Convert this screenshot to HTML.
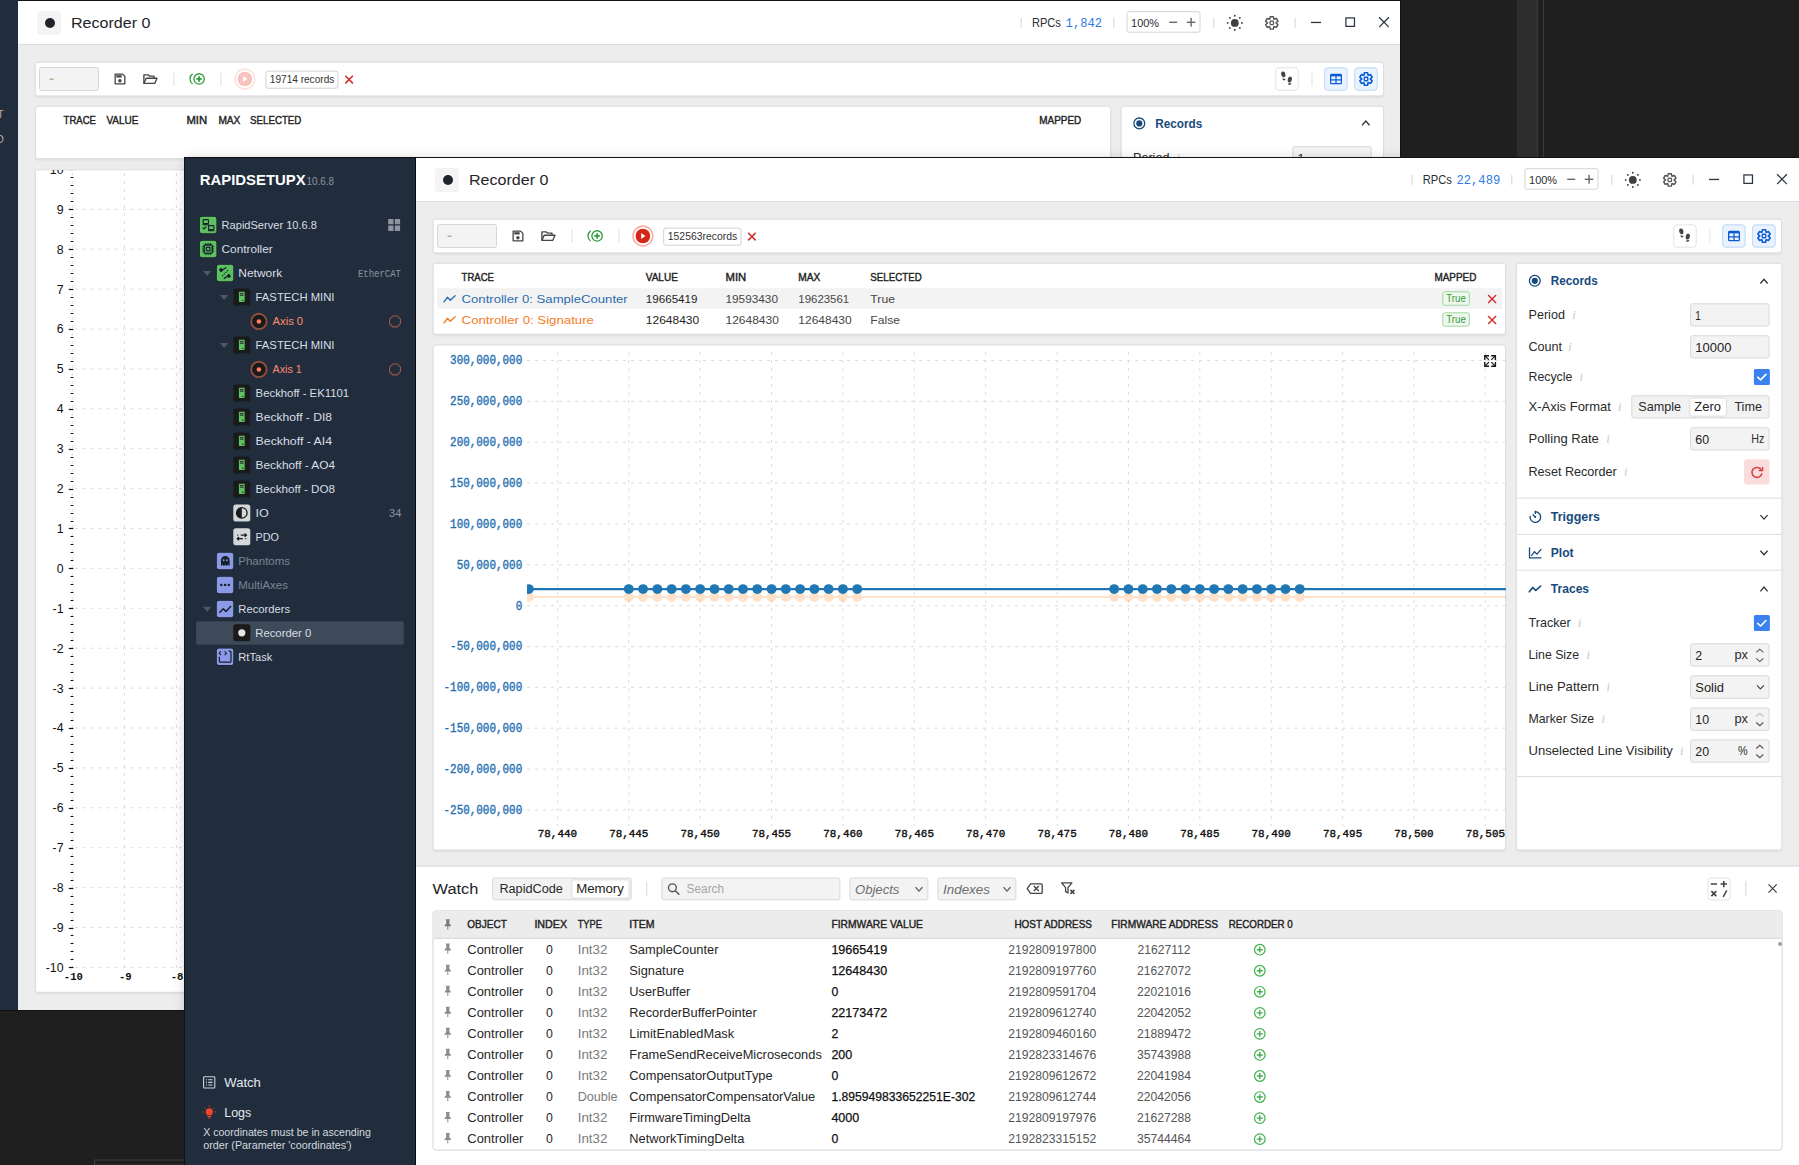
<!DOCTYPE html><html><head><meta charset="utf-8"><style>*{margin:0;padding:0}html,body{width:1799px;height:1165px;overflow:hidden;background:#1f1f1f}svg{display:block}</style></head><body>
<svg width="1799" height="1165" viewBox="0 0 1799 1165">
<defs><linearGradient id="shL" x1="0" x2="1" y1="0" y2="0"><stop offset="0" stop-color="#000" stop-opacity="0"/><stop offset="1" stop-color="#000" stop-opacity="0.13"/></linearGradient><linearGradient id="shT" x1="0" x2="0" y1="0" y2="1"><stop offset="0" stop-color="#000" stop-opacity="0"/><stop offset="1" stop-color="#000" stop-opacity="0.10"/></linearGradient><clipPath id="backchart"><rect x="35" y="170" width="160" height="822"/></clipPath><clipPath id="backwin"><rect x="18" y="45" width="1382" height="965"/></clipPath><filter id="blur1" x="-5%" y="-5%" width="110%" height="110%"><feGaussianBlur stdDeviation="0.8"/></filter><filter id="blur6" x="-10%" y="-10%" width="120%" height="120%"><feGaussianBlur stdDeviation="7"/></filter></defs>
<rect x="0.00" y="0.00" width="18.00" height="1010.00" rx="0" fill="#212d3d"/>
<text x="-2.50" y="118.00" font-size="10.00" font-family="Liberation Sans" fill="#c2b2ac">T</text>
<text x="-3.50" y="143.30" font-size="10.00" font-family="Liberation Sans" fill="#c2b2ac">D</text>
<rect x="1517.00" y="0.00" width="20.00" height="157.00" rx="0" fill="#2d2d2d"/>
<rect x="1537.00" y="0.00" width="1.00" height="157.00" rx="0" fill="#3a3a3a"/>
<rect x="1543.00" y="0.00" width="1.00" height="157.00" rx="0" fill="#3a3a3a"/>
<rect x="94.50" y="1160.00" width="94.00" height="5.00" rx="0" fill="none" stroke="#3c3c3c" stroke-width="1"/>
<rect x="18.00" y="0.00" width="1383.00" height="1010.00" rx="0" fill="#ededed"/>
<rect x="18.00" y="0.00" width="1383.00" height="1.00" rx="0" fill="#111"/>
<rect x="18.00" y="1.00" width="1383.00" height="43.00" rx="0" fill="#ffffff"/>
<rect x="18.00" y="44.00" width="1383.00" height="1.00" rx="0" fill="#dcdde2"/>
<rect x="37.00" y="11.00" width="24.00" height="24.00" rx="3" fill="#f4f4f5"/>
<circle cx="50.00" cy="23.00" r="5.00" fill="#1f232a"/>
<text x="71.00" y="28.00" font-size="15.40" font-family="Liberation Sans" fill="#1f232a" textLength="79.50" lengthAdjust="spacingAndGlyphs">Recorder 0</text>
<text x="1065.60" y="27.10" font-size="12.50" font-family="Liberation Mono" fill="#2f7ae5" textLength="36.60" lengthAdjust="spacingAndGlyphs">1,842</text>
<text x="1031.90" y="27.10" font-size="12.40" font-family="Liberation Sans" fill="#2a2e35" textLength="28.90" lengthAdjust="spacingAndGlyphs">RPCs</text>
<rect x="1020.70" y="17.80" width="1.00" height="10.00" rx="0" fill="#d5d5d5"/>
<rect x="1113.30" y="17.80" width="1.00" height="10.00" rx="0" fill="#d5d5d5"/>
<rect x="1127.00" y="11.70" width="73.00" height="20.50" rx="2" fill="#ffffff" stroke="#d4d4d4" stroke-width="1"/>
<text x="1131.10" y="26.60" font-size="11.60" font-family="Liberation Sans" fill="#2a2e35" textLength="28.00" lengthAdjust="spacingAndGlyphs">100%</text>
<rect x="1169.20" y="21.60" width="8.00" height="1.40" rx="0" fill="#666"/>
<rect x="1186.80" y="21.60" width="8.60" height="1.40" rx="0" fill="#666"/>
<rect x="1190.40" y="17.80" width="1.40" height="8.90" rx="0" fill="#666"/>
<rect x="1213.30" y="17.80" width="1.00" height="10.00" rx="0" fill="#d5d5d5"/>
<g transform="translate(1234.80 22.90)"><circle cx="0" cy="0" r="3.9" fill="#404040"/><circle cx="7.10" cy="0.00" r="0.95" fill="#404040"/><circle cx="5.02" cy="5.02" r="0.95" fill="#404040"/><circle cx="0.00" cy="7.10" r="0.95" fill="#404040"/><circle cx="-5.02" cy="5.02" r="0.95" fill="#404040"/><circle cx="-7.10" cy="0.00" r="0.95" fill="#404040"/><circle cx="-5.02" cy="-5.02" r="0.95" fill="#404040"/><circle cx="-0.00" cy="-7.10" r="0.95" fill="#404040"/><circle cx="5.02" cy="-5.02" r="0.95" fill="#404040"/></g>
<g transform="translate(1271.80 22.90)"><path d="M-1.99 -4.26L-1.55 -6.21L1.55 -6.21L1.99 -4.26Q1.93 -3.34 2.70 -3.85L4.60 -4.45L6.15 -1.76L4.68 -0.41Q3.85 0.00 4.68 0.41L6.15 1.76L4.60 4.45L2.70 3.85Q1.93 3.34 1.99 4.26L1.55 6.21L-1.55 6.21L-1.99 4.26Q-1.93 3.34 -2.70 3.85L-4.60 4.45L-6.15 1.76L-4.68 0.41Q-3.85 0.00 -4.68 -0.41L-6.15 -1.76L-4.60 -4.45L-2.70 -3.85Q-1.93 -3.34 -1.99 -4.26Z" fill="none" stroke="#555" stroke-width="1.45" stroke-linejoin="round"/><rect x="-1.70" y="-1.70" width="3.40" height="3.40" rx="0.77" fill="none" stroke="#555" stroke-width="1.30"/></g>
<rect x="1294.60" y="17.80" width="1.00" height="10.00" rx="0" fill="#d5d5d5"/>
<rect x="1311.00" y="21.80" width="10.00" height="1.30" rx="0" fill="#2c3441"/>
<rect x="1345.92" y="17.93" width="8.55" height="8.45" rx="0" fill="none" stroke="#2c3441" stroke-width="1.25"/>
<g transform="translate(1378.60 16.80)"><path d="M0.5 0.5L10.3 10.3M10.3 0.5L0.5 10.3" stroke="#2c3441" stroke-width="1.25" fill="none"/></g>
<rect x="35.20" y="63.30" width="1348.30" height="34.10" rx="2.5" fill="#000" opacity="0.07" filter="url(#blur1)"/>
<rect x="35.20" y="62.30" width="1348.30" height="33.60" rx="2.5" fill="#ffffff" stroke="#dcdde2" stroke-width="1"/>
<rect x="39.50" y="67.50" width="59.00" height="23.00" rx="2" fill="#f3f3f3" stroke="#d6d6d6" stroke-width="1"/>
<rect x="49.60" y="78.60" width="4.00" height="1.20" rx="0" fill="#b39a7a"/>
<g transform="translate(114.00 73.00)"><path d="M1.15 1.15h7.5l2.2 2.2v7.5h-9.7z" fill="none" stroke="#454545" stroke-width="1.3" stroke-linejoin="round"/><rect x="2.3" y="2.2" width="5.4" height="2.3" fill="#454545"/><circle cx="5.9" cy="7.8" r="1.75" fill="#454545"/></g>
<g transform="translate(143.00 73.60)"><path d="M0.9 9.8V1.2h4.1l1.3 1.3h4.7v2" fill="none" stroke="#454545" stroke-width="1.35" stroke-linejoin="round"/><path d="M0.9 9.8l2.3-5.2h10.8l-2.3 5.2z" fill="none" stroke="#454545" stroke-width="1.35" stroke-linejoin="round"/></g>
<rect x="173.40" y="72.00" width="1.00" height="13.60" rx="0" fill="#e0e0e0"/>
<g transform="translate(189.00 73.00)"><path d="M3.6 0.9A6.2 6.2 0 0 0 3.6 11" fill="none" stroke="#2e9e3e" stroke-width="1.3"/><circle cx="10.1" cy="5.95" r="5.2" fill="none" stroke="#2e9e3e" stroke-width="1.35"/><path d="M10.1 3.2v5.5M7.35 5.95h5.5" stroke="#2e9e3e" stroke-width="1.75"/></g>
<rect x="220.40" y="72.00" width="1.00" height="13.60" rx="0" fill="#e0e0e0"/>
<g transform="translate(244.90 79.00)"><circle cx="0" cy="0" r="9.9" fill="none" stroke="#fde2dd" stroke-width="1.6"/><circle cx="0" cy="0" r="7.3" fill="#f6c3bd"/><path d="M-1.7 -3.1l4.2 3.1-4.2 3.1z" fill="#fff"/></g>
<rect x="265.90" y="71.10" width="72.00" height="17.10" rx="2" fill="#ffffff" stroke="#d0d0d0" stroke-width="1"/>
<text x="269.80" y="83.40" font-size="10.80" font-family="Liberation Sans" fill="#333" textLength="64.50" lengthAdjust="spacingAndGlyphs">19714 records</text>
<g transform="translate(344.80 75.30)"><path d="M0.5 0.5L8.1 8.1M8.1 0.5L0.5 8.1" stroke="#d42a2a" stroke-width="1.5" fill="none"/></g>
<rect x="1275.80" y="67.80" width="22.40" height="22.40" rx="3" fill="#ffffff" stroke="#e3e3e3" stroke-width="1"/>
<g transform="translate(1281.30 72.30)"><ellipse cx="2.0" cy="2.1" rx="2.1" ry="2.9" fill="#444" transform="rotate(-12 2.0 2.1)"/><path d="M1.1 5.9l3.2 0.7-0.9 1.6-1.8-0.4z" fill="#444"/><ellipse cx="8.5" cy="7.3" rx="2.05" ry="3.0" fill="#444" transform="rotate(12 8.5 7.3)"/><path d="M6.6 11.2l3.2-0.6 0.1 1.4-2.5 0.6z" fill="#444"/></g>
<rect x="1311.50" y="72.30" width="1.00" height="13.40" rx="0" fill="#e3e3e3"/>
<rect x="1324.70" y="67.80" width="22.50" height="22.40" rx="3" fill="#eaf3fd" stroke="#bad8f6" stroke-width="1"/>
<g transform="translate(1330.00 73.80)"><rect x="0.65" y="0.65" width="10.7" height="9.2" rx="0.9" fill="none" stroke="#0b5bd3" stroke-width="1.3"/><rect x="0.65" y="0.65" width="10.7" height="1.9" fill="#0b5bd3"/><path d="M6 2v7.8M0.7 6.1h10.6" stroke="#0b5bd3" stroke-width="1.2"/></g>
<rect x="1354.70" y="67.80" width="22.50" height="22.40" rx="3" fill="#eaf3fd" stroke="#bad8f6" stroke-width="1"/>
<g transform="translate(1366.00 79.00)"><path d="M-1.99 -4.26L-1.55 -6.21L1.55 -6.21L1.99 -4.26Q1.93 -3.34 2.70 -3.85L4.60 -4.45L6.15 -1.76L4.68 -0.41Q3.85 0.00 4.68 0.41L6.15 1.76L4.60 4.45L2.70 3.85Q1.93 3.34 1.99 4.26L1.55 6.21L-1.55 6.21L-1.99 4.26Q-1.93 3.34 -2.70 3.85L-4.60 4.45L-6.15 1.76L-4.68 0.41Q-3.85 0.00 -4.68 -0.41L-6.15 -1.76L-4.60 -4.45L-2.70 -3.85Q-1.93 -3.34 -1.99 -4.26Z" fill="none" stroke="#0b5bd3" stroke-width="1.6" stroke-linejoin="round"/><rect x="-1.70" y="-1.70" width="3.40" height="3.40" rx="0.77" fill="none" stroke="#0b5bd3" stroke-width="1.44"/></g>
<rect x="35.50" y="107.20" width="1075.10" height="53.00" rx="2.5" fill="#000" opacity="0.07" filter="url(#blur1)"/>
<rect x="35.50" y="106.20" width="1075.10" height="52.50" rx="2.5" fill="#ffffff" stroke="#dcdde2" stroke-width="1"/>
<text x="63.60" y="124.40" font-size="10.50" font-family="Liberation Sans" fill="#222" textLength="32.40" lengthAdjust="spacingAndGlyphs" stroke="#222" stroke-width="0.4">TRACE</text>
<text x="106.40" y="124.40" font-size="10.50" font-family="Liberation Sans" fill="#222" textLength="32.00" lengthAdjust="spacingAndGlyphs" stroke="#222" stroke-width="0.4">VALUE</text>
<text x="186.40" y="124.40" font-size="10.50" font-family="Liberation Sans" fill="#222" textLength="20.70" lengthAdjust="spacingAndGlyphs" stroke="#222" stroke-width="0.4">MIN</text>
<text x="218.40" y="124.40" font-size="10.50" font-family="Liberation Sans" fill="#222" textLength="22.00" lengthAdjust="spacingAndGlyphs" stroke="#222" stroke-width="0.4">MAX</text>
<text x="250.00" y="124.40" font-size="10.50" font-family="Liberation Sans" fill="#222" textLength="51.40" lengthAdjust="spacingAndGlyphs" stroke="#222" stroke-width="0.4">SELECTED</text>
<text x="1039.30" y="124.40" font-size="10.50" font-family="Liberation Sans" fill="#222" textLength="41.90" lengthAdjust="spacingAndGlyphs" stroke="#222" stroke-width="0.4">MAPPED</text>
<rect x="1121.20" y="107.20" width="262.30" height="59.50" rx="2.5" fill="#000" opacity="0.07" filter="url(#blur1)"/>
<rect x="1121.20" y="106.20" width="262.30" height="59.00" rx="2.5" fill="#ffffff" stroke="#dcdde2" stroke-width="1"/>
<g transform="translate(1139.30 123.40)"><circle cx="0" cy="0" r="5.4" fill="none" stroke="#174a7c" stroke-width="1.3"/><circle cx="0" cy="0" r="3.1" fill="#174a7c"/></g>
<text x="1155.30" y="128.10" font-size="12.60" font-family="Liberation Sans" fill="#174a7c" font-weight="bold" textLength="47.00" lengthAdjust="spacingAndGlyphs">Records</text>
<g transform="translate(1361.60 120.60)"><path d="M0.5 4.7L4.2 0.5L7.9 4.7" fill="none" stroke="#333" stroke-width="1.3"/></g>
<text x="1133.00" y="162.20" font-size="12.60" font-family="Liberation Sans" fill="#2a2a2a">Period</text>
<text x="1176.50" y="162.20" font-size="12.50" font-family="Liberation Serif" fill="#c8c8c8" font-style="italic">i</text>
<rect x="1292.80" y="146.70" width="78.40" height="23.00" rx="2" fill="#f3f3f3" stroke="#d8d8d8" stroke-width="1"/>
<text x="1297.60" y="162.50" font-size="12.40" font-family="Liberation Sans" fill="#222">1</text>
<rect x="35.40" y="170.80" width="1075.20" height="823.00" rx="2.5" fill="#000" opacity="0.07" filter="url(#blur1)"/>
<rect x="35.40" y="169.80" width="1075.20" height="822.50" rx="2.5" fill="#ffffff" stroke="#dcdde2" stroke-width="1"/>
<g clip-path="url(#backchart)"><line x1="72.3" y1="173" x2="72.3" y2="968" stroke="#dedede" stroke-width="1" stroke-dasharray="3 5"/><line x1="124.5" y1="173" x2="124.5" y2="968" stroke="#dedede" stroke-width="1" stroke-dasharray="3 5"/><line x1="176.6" y1="173" x2="176.6" y2="968" stroke="#dedede" stroke-width="1" stroke-dasharray="3 5"/><line x1="75" y1="967.4" x2="190" y2="967.4" stroke="#dedede" stroke-width="1" stroke-dasharray="3 5"/><line x1="68.8" y1="967.5" x2="73.4" y2="967.5" stroke="#111" stroke-width="1.2"/><text x="63.5" y="971.8" font-size="12.3" font-family="Liberation Sans" fill="#111" text-anchor="end">-10</text><line x1="75" y1="927.5" x2="190" y2="927.5" stroke="#dedede" stroke-width="1" stroke-dasharray="3 5"/><line x1="68.8" y1="928.5" x2="73.4" y2="928.5" stroke="#111" stroke-width="1.2"/><line x1="70.6" y1="935.5" x2="73.4" y2="935.5" stroke="#111" stroke-width="1"/><line x1="70.6" y1="943.5" x2="73.4" y2="943.5" stroke="#111" stroke-width="1"/><line x1="70.6" y1="951.5" x2="73.4" y2="951.5" stroke="#111" stroke-width="1"/><line x1="70.6" y1="959.5" x2="73.4" y2="959.5" stroke="#111" stroke-width="1"/><text x="63.5" y="931.9" font-size="12.3" font-family="Liberation Sans" fill="#111" text-anchor="end">-9</text><line x1="75" y1="887.6" x2="190" y2="887.6" stroke="#dedede" stroke-width="1" stroke-dasharray="3 5"/><line x1="68.8" y1="888.5" x2="73.4" y2="888.5" stroke="#111" stroke-width="1.2"/><line x1="70.6" y1="896.5" x2="73.4" y2="896.5" stroke="#111" stroke-width="1"/><line x1="70.6" y1="904.5" x2="73.4" y2="904.5" stroke="#111" stroke-width="1"/><line x1="70.6" y1="912.5" x2="73.4" y2="912.5" stroke="#111" stroke-width="1"/><line x1="70.6" y1="920.5" x2="73.4" y2="920.5" stroke="#111" stroke-width="1"/><text x="63.5" y="892.0" font-size="12.3" font-family="Liberation Sans" fill="#111" text-anchor="end">-8</text><line x1="75" y1="847.7" x2="190" y2="847.7" stroke="#dedede" stroke-width="1" stroke-dasharray="3 5"/><line x1="68.8" y1="848.5" x2="73.4" y2="848.5" stroke="#111" stroke-width="1.2"/><line x1="70.6" y1="856.5" x2="73.4" y2="856.5" stroke="#111" stroke-width="1"/><line x1="70.6" y1="864.5" x2="73.4" y2="864.5" stroke="#111" stroke-width="1"/><line x1="70.6" y1="872.5" x2="73.4" y2="872.5" stroke="#111" stroke-width="1"/><line x1="70.6" y1="880.5" x2="73.4" y2="880.5" stroke="#111" stroke-width="1"/><text x="63.5" y="852.1" font-size="12.3" font-family="Liberation Sans" fill="#111" text-anchor="end">-7</text><line x1="75" y1="807.8" x2="190" y2="807.8" stroke="#dedede" stroke-width="1" stroke-dasharray="3 5"/><line x1="68.8" y1="808.5" x2="73.4" y2="808.5" stroke="#111" stroke-width="1.2"/><line x1="70.6" y1="816.5" x2="73.4" y2="816.5" stroke="#111" stroke-width="1"/><line x1="70.6" y1="824.5" x2="73.4" y2="824.5" stroke="#111" stroke-width="1"/><line x1="70.6" y1="832.5" x2="73.4" y2="832.5" stroke="#111" stroke-width="1"/><line x1="70.6" y1="840.5" x2="73.4" y2="840.5" stroke="#111" stroke-width="1"/><text x="63.5" y="812.2" font-size="12.3" font-family="Liberation Sans" fill="#111" text-anchor="end">-6</text><line x1="75" y1="767.9" x2="190" y2="767.9" stroke="#dedede" stroke-width="1" stroke-dasharray="3 5"/><line x1="68.8" y1="768.5" x2="73.4" y2="768.5" stroke="#111" stroke-width="1.2"/><line x1="70.6" y1="776.5" x2="73.4" y2="776.5" stroke="#111" stroke-width="1"/><line x1="70.6" y1="784.5" x2="73.4" y2="784.5" stroke="#111" stroke-width="1"/><line x1="70.6" y1="792.5" x2="73.4" y2="792.5" stroke="#111" stroke-width="1"/><line x1="70.6" y1="800.5" x2="73.4" y2="800.5" stroke="#111" stroke-width="1"/><text x="63.5" y="772.3" font-size="12.3" font-family="Liberation Sans" fill="#111" text-anchor="end">-5</text><line x1="75" y1="728.0" x2="190" y2="728.0" stroke="#dedede" stroke-width="1" stroke-dasharray="3 5"/><line x1="68.8" y1="728.5" x2="73.4" y2="728.5" stroke="#111" stroke-width="1.2"/><line x1="70.6" y1="736.5" x2="73.4" y2="736.5" stroke="#111" stroke-width="1"/><line x1="70.6" y1="744.5" x2="73.4" y2="744.5" stroke="#111" stroke-width="1"/><line x1="70.6" y1="752.5" x2="73.4" y2="752.5" stroke="#111" stroke-width="1"/><line x1="70.6" y1="760.5" x2="73.4" y2="760.5" stroke="#111" stroke-width="1"/><text x="63.5" y="732.4" font-size="12.3" font-family="Liberation Sans" fill="#111" text-anchor="end">-4</text><line x1="75" y1="688.1" x2="190" y2="688.1" stroke="#dedede" stroke-width="1" stroke-dasharray="3 5"/><line x1="68.8" y1="688.5" x2="73.4" y2="688.5" stroke="#111" stroke-width="1.2"/><line x1="70.6" y1="696.5" x2="73.4" y2="696.5" stroke="#111" stroke-width="1"/><line x1="70.6" y1="704.5" x2="73.4" y2="704.5" stroke="#111" stroke-width="1"/><line x1="70.6" y1="712.5" x2="73.4" y2="712.5" stroke="#111" stroke-width="1"/><line x1="70.6" y1="720.5" x2="73.4" y2="720.5" stroke="#111" stroke-width="1"/><text x="63.5" y="692.5" font-size="12.3" font-family="Liberation Sans" fill="#111" text-anchor="end">-3</text><line x1="75" y1="648.2" x2="190" y2="648.2" stroke="#dedede" stroke-width="1" stroke-dasharray="3 5"/><line x1="68.8" y1="648.5" x2="73.4" y2="648.5" stroke="#111" stroke-width="1.2"/><line x1="70.6" y1="656.5" x2="73.4" y2="656.5" stroke="#111" stroke-width="1"/><line x1="70.6" y1="664.5" x2="73.4" y2="664.5" stroke="#111" stroke-width="1"/><line x1="70.6" y1="672.5" x2="73.4" y2="672.5" stroke="#111" stroke-width="1"/><line x1="70.6" y1="680.5" x2="73.4" y2="680.5" stroke="#111" stroke-width="1"/><text x="63.5" y="652.6" font-size="12.3" font-family="Liberation Sans" fill="#111" text-anchor="end">-2</text><line x1="75" y1="608.3" x2="190" y2="608.3" stroke="#dedede" stroke-width="1" stroke-dasharray="3 5"/><line x1="68.8" y1="608.5" x2="73.4" y2="608.5" stroke="#111" stroke-width="1.2"/><line x1="70.6" y1="616.5" x2="73.4" y2="616.5" stroke="#111" stroke-width="1"/><line x1="70.6" y1="624.5" x2="73.4" y2="624.5" stroke="#111" stroke-width="1"/><line x1="70.6" y1="632.5" x2="73.4" y2="632.5" stroke="#111" stroke-width="1"/><line x1="70.6" y1="640.5" x2="73.4" y2="640.5" stroke="#111" stroke-width="1"/><text x="63.5" y="612.7" font-size="12.3" font-family="Liberation Sans" fill="#111" text-anchor="end">-1</text><line x1="75" y1="568.4" x2="190" y2="568.4" stroke="#dedede" stroke-width="1" stroke-dasharray="3 5"/><line x1="68.8" y1="568.5" x2="73.4" y2="568.5" stroke="#111" stroke-width="1.2"/><line x1="70.6" y1="576.5" x2="73.4" y2="576.5" stroke="#111" stroke-width="1"/><line x1="70.6" y1="584.5" x2="73.4" y2="584.5" stroke="#111" stroke-width="1"/><line x1="70.6" y1="592.5" x2="73.4" y2="592.5" stroke="#111" stroke-width="1"/><line x1="70.6" y1="600.5" x2="73.4" y2="600.5" stroke="#111" stroke-width="1"/><text x="63.5" y="572.8" font-size="12.3" font-family="Liberation Sans" fill="#111" text-anchor="end">0</text><line x1="75" y1="528.5" x2="190" y2="528.5" stroke="#dedede" stroke-width="1" stroke-dasharray="3 5"/><line x1="68.8" y1="528.5" x2="73.4" y2="528.5" stroke="#111" stroke-width="1.2"/><line x1="70.6" y1="536.5" x2="73.4" y2="536.5" stroke="#111" stroke-width="1"/><line x1="70.6" y1="544.5" x2="73.4" y2="544.5" stroke="#111" stroke-width="1"/><line x1="70.6" y1="552.5" x2="73.4" y2="552.5" stroke="#111" stroke-width="1"/><line x1="70.6" y1="560.5" x2="73.4" y2="560.5" stroke="#111" stroke-width="1"/><text x="63.5" y="532.9" font-size="12.3" font-family="Liberation Sans" fill="#111" text-anchor="end">1</text><line x1="75" y1="488.6" x2="190" y2="488.6" stroke="#dedede" stroke-width="1" stroke-dasharray="3 5"/><line x1="68.8" y1="489.5" x2="73.4" y2="489.5" stroke="#111" stroke-width="1.2"/><line x1="70.6" y1="497.5" x2="73.4" y2="497.5" stroke="#111" stroke-width="1"/><line x1="70.6" y1="505.5" x2="73.4" y2="505.5" stroke="#111" stroke-width="1"/><line x1="70.6" y1="513.5" x2="73.4" y2="513.5" stroke="#111" stroke-width="1"/><line x1="70.6" y1="521.5" x2="73.4" y2="521.5" stroke="#111" stroke-width="1"/><text x="63.5" y="493.0" font-size="12.3" font-family="Liberation Sans" fill="#111" text-anchor="end">2</text><line x1="75" y1="448.7" x2="190" y2="448.7" stroke="#dedede" stroke-width="1" stroke-dasharray="3 5"/><line x1="68.8" y1="449.5" x2="73.4" y2="449.5" stroke="#111" stroke-width="1.2"/><line x1="70.6" y1="457.5" x2="73.4" y2="457.5" stroke="#111" stroke-width="1"/><line x1="70.6" y1="465.5" x2="73.4" y2="465.5" stroke="#111" stroke-width="1"/><line x1="70.6" y1="473.5" x2="73.4" y2="473.5" stroke="#111" stroke-width="1"/><line x1="70.6" y1="481.5" x2="73.4" y2="481.5" stroke="#111" stroke-width="1"/><text x="63.5" y="453.1" font-size="12.3" font-family="Liberation Sans" fill="#111" text-anchor="end">3</text><line x1="75" y1="408.8" x2="190" y2="408.8" stroke="#dedede" stroke-width="1" stroke-dasharray="3 5"/><line x1="68.8" y1="409.5" x2="73.4" y2="409.5" stroke="#111" stroke-width="1.2"/><line x1="70.6" y1="417.5" x2="73.4" y2="417.5" stroke="#111" stroke-width="1"/><line x1="70.6" y1="425.5" x2="73.4" y2="425.5" stroke="#111" stroke-width="1"/><line x1="70.6" y1="433.5" x2="73.4" y2="433.5" stroke="#111" stroke-width="1"/><line x1="70.6" y1="441.5" x2="73.4" y2="441.5" stroke="#111" stroke-width="1"/><text x="63.5" y="413.2" font-size="12.3" font-family="Liberation Sans" fill="#111" text-anchor="end">4</text><line x1="75" y1="368.9" x2="190" y2="368.9" stroke="#dedede" stroke-width="1" stroke-dasharray="3 5"/><line x1="68.8" y1="369.5" x2="73.4" y2="369.5" stroke="#111" stroke-width="1.2"/><line x1="70.6" y1="377.5" x2="73.4" y2="377.5" stroke="#111" stroke-width="1"/><line x1="70.6" y1="385.5" x2="73.4" y2="385.5" stroke="#111" stroke-width="1"/><line x1="70.6" y1="393.5" x2="73.4" y2="393.5" stroke="#111" stroke-width="1"/><line x1="70.6" y1="401.5" x2="73.4" y2="401.5" stroke="#111" stroke-width="1"/><text x="63.5" y="373.3" font-size="12.3" font-family="Liberation Sans" fill="#111" text-anchor="end">5</text><line x1="75" y1="329.0" x2="190" y2="329.0" stroke="#dedede" stroke-width="1" stroke-dasharray="3 5"/><line x1="68.8" y1="329.5" x2="73.4" y2="329.5" stroke="#111" stroke-width="1.2"/><line x1="70.6" y1="337.5" x2="73.4" y2="337.5" stroke="#111" stroke-width="1"/><line x1="70.6" y1="345.5" x2="73.4" y2="345.5" stroke="#111" stroke-width="1"/><line x1="70.6" y1="353.5" x2="73.4" y2="353.5" stroke="#111" stroke-width="1"/><line x1="70.6" y1="361.5" x2="73.4" y2="361.5" stroke="#111" stroke-width="1"/><text x="63.5" y="333.4" font-size="12.3" font-family="Liberation Sans" fill="#111" text-anchor="end">6</text><line x1="75" y1="289.1" x2="190" y2="289.1" stroke="#dedede" stroke-width="1" stroke-dasharray="3 5"/><line x1="68.8" y1="289.5" x2="73.4" y2="289.5" stroke="#111" stroke-width="1.2"/><line x1="70.6" y1="297.5" x2="73.4" y2="297.5" stroke="#111" stroke-width="1"/><line x1="70.6" y1="305.5" x2="73.4" y2="305.5" stroke="#111" stroke-width="1"/><line x1="70.6" y1="313.5" x2="73.4" y2="313.5" stroke="#111" stroke-width="1"/><line x1="70.6" y1="321.5" x2="73.4" y2="321.5" stroke="#111" stroke-width="1"/><text x="63.5" y="293.5" font-size="12.3" font-family="Liberation Sans" fill="#111" text-anchor="end">7</text><line x1="75" y1="249.2" x2="190" y2="249.2" stroke="#dedede" stroke-width="1" stroke-dasharray="3 5"/><line x1="68.8" y1="249.5" x2="73.4" y2="249.5" stroke="#111" stroke-width="1.2"/><line x1="70.6" y1="257.5" x2="73.4" y2="257.5" stroke="#111" stroke-width="1"/><line x1="70.6" y1="265.5" x2="73.4" y2="265.5" stroke="#111" stroke-width="1"/><line x1="70.6" y1="273.5" x2="73.4" y2="273.5" stroke="#111" stroke-width="1"/><line x1="70.6" y1="281.5" x2="73.4" y2="281.5" stroke="#111" stroke-width="1"/><text x="63.5" y="253.6" font-size="12.3" font-family="Liberation Sans" fill="#111" text-anchor="end">8</text><line x1="75" y1="209.3" x2="190" y2="209.3" stroke="#dedede" stroke-width="1" stroke-dasharray="3 5"/><line x1="68.8" y1="209.5" x2="73.4" y2="209.5" stroke="#111" stroke-width="1.2"/><line x1="70.6" y1="217.5" x2="73.4" y2="217.5" stroke="#111" stroke-width="1"/><line x1="70.6" y1="225.5" x2="73.4" y2="225.5" stroke="#111" stroke-width="1"/><line x1="70.6" y1="233.5" x2="73.4" y2="233.5" stroke="#111" stroke-width="1"/><line x1="70.6" y1="241.5" x2="73.4" y2="241.5" stroke="#111" stroke-width="1"/><text x="63.5" y="213.7" font-size="12.3" font-family="Liberation Sans" fill="#111" text-anchor="end">9</text><line x1="75" y1="169.4" x2="190" y2="169.4" stroke="#dedede" stroke-width="1" stroke-dasharray="3 5"/><line x1="68.8" y1="169.5" x2="73.4" y2="169.5" stroke="#111" stroke-width="1.2"/><line x1="70.6" y1="177.5" x2="73.4" y2="177.5" stroke="#111" stroke-width="1"/><line x1="70.6" y1="185.5" x2="73.4" y2="185.5" stroke="#111" stroke-width="1"/><line x1="70.6" y1="193.5" x2="73.4" y2="193.5" stroke="#111" stroke-width="1"/><line x1="70.6" y1="201.5" x2="73.4" y2="201.5" stroke="#111" stroke-width="1"/><text x="63.5" y="173.8" font-size="12.3" font-family="Liberation Sans" fill="#111" text-anchor="end">10</text></g>
<text x="73.40" y="979.60" font-size="10.60" font-family="Liberation Mono" fill="#111" font-weight="bold" text-anchor="middle">-10</text>
<text x="125.30" y="979.60" font-size="10.60" font-family="Liberation Mono" fill="#111" font-weight="bold" text-anchor="middle">-9</text>
<text x="177.00" y="979.60" font-size="10.60" font-family="Liberation Mono" fill="#111" font-weight="bold" text-anchor="middle">-8</text>
<rect x="1400.00" y="0.00" width="1.00" height="1010.00" rx="0" fill="#111"/>
<rect x="0.00" y="1010.00" width="184.00" height="1.00" rx="0" fill="#111"/>
<g clip-path="url(#backwin)"><rect x="187" y="161" width="1300" height="1100" fill="#000" opacity="0.26" filter="url(#blur6)"/></g>
<rect x="184.00" y="157.00" width="232.00" height="1008.00" rx="0" fill="#212d3d"/>
<rect x="184.00" y="157.00" width="232.00" height="1.00" rx="0" fill="#111"/>
<rect x="184.00" y="157.00" width="1.00" height="1008.00" rx="0" fill="#111"/>
<rect x="415.00" y="157.00" width="1.00" height="1008.00" rx="0" fill="#0c0c0c"/>
<text x="199.70" y="184.70" font-size="14.90" font-family="Liberation Sans" fill="#ffffff" font-weight="bold">RAPIDSETUPX</text>
<text x="306.60" y="184.70" font-size="10.20" font-family="Liberation Sans" fill="#8d95a0" textLength="27.40" lengthAdjust="spacingAndGlyphs">10.6.8</text>
<rect x="199.40" y="216.30" width="17.50" height="17.50" rx="2.5" fill="#111820"/>
<rect x="199.90" y="216.80" width="16.50" height="16.50" rx="2" fill="#5ec161"/>
<g transform="translate(199.90 216.80)"><rect x="3.2" y="2.8" width="5.4" height="4" rx="0.6" fill="none" stroke="#16202a" stroke-width="1.1"/><path d="M2.6 7.9h6.6" stroke="#16202a" stroke-width="1.1"/><rect x="8.6" y="8.8" width="5.4" height="4" rx="0.6" fill="none" stroke="#16202a" stroke-width="1.1"/><path d="M8 13.9h6.6" stroke="#16202a" stroke-width="1.1"/><path d="M2.8 10.8l1.3 1.3 2.4-2.5" fill="none" stroke="#16202a" stroke-width="1.1"/></g>
<text x="221.60" y="229.20" font-size="11.80" font-family="Liberation Sans" fill="#d9dee4" textLength="95.30" lengthAdjust="spacingAndGlyphs">RapidServer 10.6.8</text>
<path d="M388.2 219.0h5.3v5.3h-5.3zM394.8 219.0h5.3v5.3h-5.3zM388.2 225.6h5.3v5.3h-5.3zM394.8 225.6h5.3v5.3h-5.3z" fill="#8e959e"/>
<rect x="199.40" y="240.29" width="17.50" height="17.50" rx="2.5" fill="#111820"/>
<rect x="199.90" y="240.79" width="16.50" height="16.50" rx="2" fill="#5ec161"/>
<g transform="translate(199.90 240.79)"><rect x="4.2" y="4.2" width="8.1" height="8.1" rx="0.8" fill="none" stroke="#16202a" stroke-width="1.4"/><rect x="6.5" y="6.5" width="3.5" height="3.5" fill="none" stroke="#16202a" stroke-width="1.2"/><path d="M6 2.3v1.6M8.25 2.3v1.6M10.5 2.3v1.6M6 12.6v1.6M8.25 12.6v1.6M10.5 12.6v1.6M2.3 6h1.6M2.3 8.25h1.6M2.3 10.5h1.6M12.6 6h1.6M12.6 8.25h1.6M12.6 10.5h1.6" stroke="#16202a" stroke-width="1.1"/></g>
<text x="221.60" y="253.19" font-size="11.80" font-family="Liberation Sans" fill="#d9dee4">Controller</text>
<path d="M202.90 270.98h8.4l-4.2 5z" fill="#4d5866"/>
<rect x="216.30" y="264.28" width="17.50" height="17.50" rx="2.5" fill="#111820"/>
<rect x="216.80" y="264.78" width="16.50" height="16.50" rx="2" fill="#5ec161"/>
<g transform="translate(216.80 264.78)"><path d="M3.5 6.5l6-3.8M7 13.8l6-3.8" stroke="#16202a" stroke-width="1.3"/><rect x="2.8" y="3.6" width="3" height="3.4" transform="rotate(-35 4.3 5.3)" fill="#16202a"/><rect x="10.6" y="9.4" width="3" height="3.4" transform="rotate(-35 12.1 11.1)" fill="#16202a"/><path d="M5.2 11.5L11.4 5.3" stroke="#16202a" stroke-width="1.1" stroke-dasharray="1.4 1"/></g>
<text x="238.30" y="277.18" font-size="11.80" font-family="Liberation Sans" fill="#d9dee4" textLength="43.90" lengthAdjust="spacingAndGlyphs">Network</text>
<text x="401.00" y="276.60" font-size="11.80" font-family="Liberation Mono" fill="#8e959e" text-anchor="end" textLength="43.00" lengthAdjust="spacingAndGlyphs">EtherCAT</text>
<path d="M219.90 294.97h8.4l-4.2 5z" fill="#4d5866"/>
<rect x="233.30" y="288.47" width="17.00" height="17.00" rx="2.5" fill="#1a1a1a"/>
<g transform="translate(233.30 288.47)"><rect x="5.6" y="3.4" width="5.8" height="10.2" rx="0.7" fill="#5ec161"/><path d="M6.6 5.2h3.8M6.6 6.8h3.8" stroke="#1a1a1a" stroke-width="0.9"/><circle cx="9.6" cy="11.9" r="0.7" fill="#1a1a1a"/></g>
<text x="255.60" y="301.17" font-size="11.80" font-family="Liberation Sans" fill="#d9dee4" textLength="78.90" lengthAdjust="spacingAndGlyphs">FASTECH MINI</text>
<circle cx="258.90" cy="321.46" r="7.70" fill="#1a1a1a" stroke="#93503f" stroke-width="1.8"/>
<circle cx="258.90" cy="321.46" r="2.30" fill="#ff7b5c"/>
<text x="272.60" y="325.16" font-size="11.80" font-family="Liberation Sans" fill="#ff8a6c" textLength="30.50" lengthAdjust="spacingAndGlyphs">Axis 0</text>
<polygon points="400.45,323.72 397.26,326.91 392.74,326.91 389.55,323.72 389.55,319.20 392.74,316.01 397.26,316.01 400.45,319.20" fill="none" stroke="#9e5548" stroke-width="1.1"/>
<path d="M219.90 342.95h8.4l-4.2 5z" fill="#4d5866"/>
<rect x="233.30" y="336.45" width="17.00" height="17.00" rx="2.5" fill="#1a1a1a"/>
<g transform="translate(233.30 336.45)"><rect x="5.6" y="3.4" width="5.8" height="10.2" rx="0.7" fill="#5ec161"/><path d="M6.6 5.2h3.8M6.6 6.8h3.8" stroke="#1a1a1a" stroke-width="0.9"/><circle cx="9.6" cy="11.9" r="0.7" fill="#1a1a1a"/></g>
<text x="255.60" y="349.15" font-size="11.80" font-family="Liberation Sans" fill="#d9dee4" textLength="78.90" lengthAdjust="spacingAndGlyphs">FASTECH MINI</text>
<circle cx="258.90" cy="369.44" r="7.70" fill="#1a1a1a" stroke="#93503f" stroke-width="1.8"/>
<circle cx="258.90" cy="369.44" r="2.30" fill="#ff7b5c"/>
<text x="272.60" y="373.14" font-size="11.80" font-family="Liberation Sans" fill="#ff8a6c" textLength="29.20" lengthAdjust="spacingAndGlyphs">Axis 1</text>
<polygon points="400.45,371.70 397.26,374.89 392.74,374.89 389.55,371.70 389.55,367.18 392.74,363.99 397.26,363.99 400.45,367.18" fill="none" stroke="#9e5548" stroke-width="1.1"/>
<rect x="233.30" y="384.43" width="17.00" height="17.00" rx="2.5" fill="#1a1a1a"/>
<g transform="translate(233.30 384.43)"><rect x="5.6" y="3.4" width="5.8" height="10.2" rx="0.7" fill="#5ec161"/><path d="M6.6 5.2h3.8M6.6 6.8h3.8" stroke="#1a1a1a" stroke-width="0.9"/><circle cx="9.6" cy="11.9" r="0.7" fill="#1a1a1a"/></g>
<text x="255.60" y="397.13" font-size="11.80" font-family="Liberation Sans" fill="#d9dee4" textLength="93.50" lengthAdjust="spacingAndGlyphs">Beckhoff - EK1101</text>
<rect x="233.30" y="408.42" width="17.00" height="17.00" rx="2.5" fill="#1a1a1a"/>
<g transform="translate(233.30 408.42)"><rect x="5.6" y="3.4" width="5.8" height="10.2" rx="0.7" fill="#5ec161"/><path d="M6.6 5.2h3.8M6.6 6.8h3.8" stroke="#1a1a1a" stroke-width="0.9"/><circle cx="9.6" cy="11.9" r="0.7" fill="#1a1a1a"/></g>
<text x="255.60" y="421.12" font-size="11.80" font-family="Liberation Sans" fill="#d9dee4" textLength="76.50" lengthAdjust="spacingAndGlyphs">Beckhoff - DI8</text>
<rect x="233.30" y="432.41" width="17.00" height="17.00" rx="2.5" fill="#1a1a1a"/>
<g transform="translate(233.30 432.41)"><rect x="5.6" y="3.4" width="5.8" height="10.2" rx="0.7" fill="#5ec161"/><path d="M6.6 5.2h3.8M6.6 6.8h3.8" stroke="#1a1a1a" stroke-width="0.9"/><circle cx="9.6" cy="11.9" r="0.7" fill="#1a1a1a"/></g>
<text x="255.60" y="445.11" font-size="11.80" font-family="Liberation Sans" fill="#d9dee4" textLength="76.50" lengthAdjust="spacingAndGlyphs">Beckhoff - AI4</text>
<rect x="233.30" y="456.40" width="17.00" height="17.00" rx="2.5" fill="#1a1a1a"/>
<g transform="translate(233.30 456.40)"><rect x="5.6" y="3.4" width="5.8" height="10.2" rx="0.7" fill="#5ec161"/><path d="M6.6 5.2h3.8M6.6 6.8h3.8" stroke="#1a1a1a" stroke-width="0.9"/><circle cx="9.6" cy="11.9" r="0.7" fill="#1a1a1a"/></g>
<text x="255.60" y="469.10" font-size="11.80" font-family="Liberation Sans" fill="#d9dee4" textLength="79.50" lengthAdjust="spacingAndGlyphs">Beckhoff - AO4</text>
<rect x="233.30" y="480.39" width="17.00" height="17.00" rx="2.5" fill="#1a1a1a"/>
<g transform="translate(233.30 480.39)"><rect x="5.6" y="3.4" width="5.8" height="10.2" rx="0.7" fill="#5ec161"/><path d="M6.6 5.2h3.8M6.6 6.8h3.8" stroke="#1a1a1a" stroke-width="0.9"/><circle cx="9.6" cy="11.9" r="0.7" fill="#1a1a1a"/></g>
<text x="255.60" y="493.09" font-size="11.80" font-family="Liberation Sans" fill="#d9dee4" textLength="79.50" lengthAdjust="spacingAndGlyphs">Beckhoff - DO8</text>
<rect x="233.30" y="504.38" width="17.00" height="17.00" rx="2.5" fill="#d4d6d8"/>
<g transform="translate(233.30 504.38)"><circle cx="8.5" cy="8.5" r="5.3" fill="none" stroke="#1a1a1a" stroke-width="1.3"/><path d="M8.5 3.2A5.3 5.3 0 0 0 8.5 13.8z" fill="#1a1a1a"/></g>
<text x="255.60" y="517.08" font-size="11.80" font-family="Liberation Sans" fill="#d9dee4" textLength="13.30" lengthAdjust="spacingAndGlyphs">IO</text>
<text x="401.30" y="517.08" font-size="11.00" font-family="Liberation Sans" fill="#8e959e" text-anchor="end">34</text>
<rect x="233.30" y="528.37" width="17.00" height="17.00" rx="2.5" fill="#d4d6d8"/>
<g transform="translate(233.30 528.37)"><path d="M7.5 6.8h5.6M11.3 5.1l1.9 1.7-1.9 1.7" fill="none" stroke="#1a1a1a" stroke-width="1.2"/><path d="M9.5 10.3H3.9M5.7 8.6L3.9 10.3l1.8 1.7" fill="none" stroke="#1a1a1a" stroke-width="1.2"/><path d="M3.9 6.8h1.2M13.1 10.3h-1.2" stroke="#1a1a1a" stroke-width="1.2" stroke-dasharray="1 1"/></g>
<text x="255.60" y="541.07" font-size="11.80" font-family="Liberation Sans" fill="#d9dee4" textLength="23.30" lengthAdjust="spacingAndGlyphs">PDO</text>
<rect x="216.30" y="552.16" width="17.50" height="17.50" rx="2.5" fill="#111820"/>
<rect x="216.80" y="552.66" width="16.50" height="16.50" rx="2" fill="#8a9ae6"/>
<g transform="translate(216.80 552.66)"><path d="M4.2 13.3V7.6a4.3 4.3 0 0 1 8.6 0v5.7l-1.4-1.2-1.5 1.2-1.4-1.2-1.4 1.2-1.5-1.2z" fill="#16202a"/><circle cx="6.9" cy="7.6" r="0.9" fill="#8a9ae6"/><circle cx="10.1" cy="7.6" r="0.9" fill="#8a9ae6"/></g>
<text x="238.30" y="565.06" font-size="11.80" font-family="Liberation Sans" fill="#7b8592" textLength="51.80" lengthAdjust="spacingAndGlyphs">Phantoms</text>
<rect x="216.30" y="576.15" width="17.50" height="17.50" rx="2.5" fill="#111820"/>
<rect x="216.80" y="576.65" width="16.50" height="16.50" rx="2" fill="#8a9ae6"/>
<g transform="translate(216.80 576.65)"><rect x="3.4" y="7.2" width="2.2" height="2.2" fill="#16202a"/><rect x="7.15" y="7.2" width="2.2" height="2.2" fill="#16202a"/><rect x="10.9" y="7.2" width="2.2" height="2.2" fill="#16202a"/></g>
<text x="238.30" y="589.05" font-size="11.80" font-family="Liberation Sans" fill="#7b8592" textLength="49.60" lengthAdjust="spacingAndGlyphs">MultiAxes</text>
<path d="M202.90 606.84h8.4l-4.2 5z" fill="#4d5866"/>
<rect x="216.30" y="600.14" width="17.50" height="17.50" rx="2.5" fill="#111820"/>
<rect x="216.80" y="600.64" width="16.50" height="16.50" rx="2" fill="#8a9ae6"/>
<g transform="translate(216.80 600.64)"><path d="M2.5 12.2l4-4 2.6 2.6 5.2-5.4" fill="none" stroke="#16202a" stroke-width="1.5" stroke-linejoin="round"/></g>
<text x="238.30" y="613.04" font-size="11.80" font-family="Liberation Sans" fill="#d9dee4" textLength="51.80" lengthAdjust="spacingAndGlyphs">Recorders</text>
<rect x="196.10" y="621.20" width="207.70" height="23.60" rx="2" fill="#3e4a59"/>
<rect x="233.30" y="624.33" width="17.00" height="17.00" rx="2.5" fill="#1a1a1a"/>
<g transform="translate(233.30 624.33)"><circle cx="8.5" cy="8.5" r="3.6" fill="#e6e6e6"/></g>
<text x="255.20" y="637.03" font-size="11.80" font-family="Liberation Sans" fill="#d9dee4" textLength="56.10" lengthAdjust="spacingAndGlyphs">Recorder 0</text>
<rect x="216.30" y="648.12" width="17.50" height="17.50" rx="2.5" fill="#111820"/>
<rect x="216.80" y="648.62" width="16.50" height="16.50" rx="2" fill="#8a9ae6"/>
<g transform="translate(216.80 648.62)"><path d="M4.2 2.8L2.4 4.6l1.8 1.8M7.8 2.8l1.8 1.8-1.8 1.8" fill="none" stroke="#16202a" stroke-width="1.1"/><path d="M2.6 8.2v4.4a1 1 0 0 0 1 1h9.6a1 1 0 0 0 1-1V3.6a1 1 0 0 0-1-1h-1.5" fill="none" stroke="#16202a" stroke-width="1.2"/></g>
<text x="238.30" y="661.02" font-size="11.80" font-family="Liberation Sans" fill="#d9dee4" textLength="34.00" lengthAdjust="spacingAndGlyphs">RtTask</text>
<g transform="translate(203.00 1076.20)"><rect x="0.6" y="0.6" width="11.2" height="11.2" rx="0.8" fill="none" stroke="#cfd4da" stroke-width="1.1"/><path d="M3 3.6h1M5.2 3.6h4.3M3 6.2h1M5.2 6.2h4.3M3 8.8h1M5.2 8.8h4.3" stroke="#cfd4da" stroke-width="1.1"/></g>
<text x="224.30" y="1086.60" font-size="12.40" font-family="Liberation Sans" fill="#e6e9ed" textLength="36.50" lengthAdjust="spacingAndGlyphs">Watch</text>
<g transform="translate(209.30 1112.50)"><path d="M-3.6 -0.6a3.6 3.6 0 1 1 7.2 0c0 1.6-1.1 2.5-1.6 3.4h-4c-0.5-0.9-1.6-1.8-1.6-3.4z" fill="#f0472b"/><rect x="-1.8" y="3.4" width="3.6" height="1.1" fill="#f0472b"/><rect x="-1.2" y="5" width="2.4" height="0.9" fill="#f0472b"/><circle cx="0" cy="-6.3" r="0.7" fill="#f0472b"/><circle cx="-4.5" cy="-4.5" r="0.6" fill="#f0472b"/><circle cx="4.5" cy="-4.5" r="0.6" fill="#f0472b"/><circle cx="-6.4" cy="-0.6" r="0.7" fill="#f0472b"/><circle cx="6.4" cy="-0.6" r="0.7" fill="#f0472b"/></g>
<text x="224.30" y="1117.00" font-size="12.40" font-family="Liberation Sans" fill="#e6e9ed">Logs</text>
<text x="203.20" y="1136.20" font-size="10.00" font-family="Liberation Sans" fill="#d4d9df" textLength="167.60" lengthAdjust="spacingAndGlyphs">X coordinates must be in ascending</text>
<text x="203.20" y="1149.20" font-size="10.00" font-family="Liberation Sans" fill="#d4d9df" textLength="148.50" lengthAdjust="spacingAndGlyphs">order (Parameter 'coordinates')</text>
<rect x="416.00" y="157.00" width="1383.00" height="1008.00" rx="0" fill="#ededed"/>
<rect x="416.00" y="157.00" width="1383.00" height="1.00" rx="0" fill="#111"/>
<rect x="416.00" y="158.00" width="1383.00" height="43.00" rx="0" fill="#ffffff"/>
<rect x="416.00" y="201.00" width="1383.00" height="1.00" rx="0" fill="#dcdde2"/>
<rect x="435.00" y="168.00" width="24.00" height="24.00" rx="3" fill="#f4f4f5"/>
<circle cx="448.00" cy="180.00" r="5.00" fill="#1f232a"/>
<text x="469.00" y="185.00" font-size="15.40" font-family="Liberation Sans" fill="#1f232a" textLength="79.50" lengthAdjust="spacingAndGlyphs">Recorder 0</text>
<text x="1456.50" y="184.10" font-size="12.50" font-family="Liberation Mono" fill="#2f7ae5" textLength="43.70" lengthAdjust="spacingAndGlyphs">22,489</text>
<text x="1422.80" y="184.10" font-size="12.40" font-family="Liberation Sans" fill="#2a2e35" textLength="28.90" lengthAdjust="spacingAndGlyphs">RPCs</text>
<rect x="1411.60" y="174.80" width="1.00" height="10.00" rx="0" fill="#d5d5d5"/>
<rect x="1511.30" y="174.80" width="1.00" height="10.00" rx="0" fill="#d5d5d5"/>
<rect x="1525.00" y="168.70" width="73.00" height="20.50" rx="2" fill="#ffffff" stroke="#d4d4d4" stroke-width="1"/>
<text x="1529.10" y="183.60" font-size="11.60" font-family="Liberation Sans" fill="#2a2e35" textLength="28.00" lengthAdjust="spacingAndGlyphs">100%</text>
<rect x="1567.20" y="178.60" width="8.00" height="1.40" rx="0" fill="#666"/>
<rect x="1584.80" y="178.60" width="8.60" height="1.40" rx="0" fill="#666"/>
<rect x="1588.40" y="174.80" width="1.40" height="8.90" rx="0" fill="#666"/>
<rect x="1611.30" y="174.80" width="1.00" height="10.00" rx="0" fill="#d5d5d5"/>
<g transform="translate(1632.80 179.90)"><circle cx="0" cy="0" r="3.9" fill="#404040"/><circle cx="7.10" cy="0.00" r="0.95" fill="#404040"/><circle cx="5.02" cy="5.02" r="0.95" fill="#404040"/><circle cx="0.00" cy="7.10" r="0.95" fill="#404040"/><circle cx="-5.02" cy="5.02" r="0.95" fill="#404040"/><circle cx="-7.10" cy="0.00" r="0.95" fill="#404040"/><circle cx="-5.02" cy="-5.02" r="0.95" fill="#404040"/><circle cx="-0.00" cy="-7.10" r="0.95" fill="#404040"/><circle cx="5.02" cy="-5.02" r="0.95" fill="#404040"/></g>
<g transform="translate(1669.80 179.90)"><path d="M-1.99 -4.26L-1.55 -6.21L1.55 -6.21L1.99 -4.26Q1.93 -3.34 2.70 -3.85L4.60 -4.45L6.15 -1.76L4.68 -0.41Q3.85 0.00 4.68 0.41L6.15 1.76L4.60 4.45L2.70 3.85Q1.93 3.34 1.99 4.26L1.55 6.21L-1.55 6.21L-1.99 4.26Q-1.93 3.34 -2.70 3.85L-4.60 4.45L-6.15 1.76L-4.68 0.41Q-3.85 0.00 -4.68 -0.41L-6.15 -1.76L-4.60 -4.45L-2.70 -3.85Q-1.93 -3.34 -1.99 -4.26Z" fill="none" stroke="#555" stroke-width="1.45" stroke-linejoin="round"/><rect x="-1.70" y="-1.70" width="3.40" height="3.40" rx="0.77" fill="none" stroke="#555" stroke-width="1.30"/></g>
<rect x="1692.60" y="174.80" width="1.00" height="10.00" rx="0" fill="#d5d5d5"/>
<rect x="1709.00" y="178.80" width="10.00" height="1.30" rx="0" fill="#2c3441"/>
<rect x="1743.92" y="174.93" width="8.55" height="8.45" rx="0" fill="none" stroke="#2c3441" stroke-width="1.25"/>
<g transform="translate(1776.60 173.80)"><path d="M0.5 0.5L10.3 10.3M10.3 0.5L0.5 10.3" stroke="#2c3441" stroke-width="1.25" fill="none"/></g>
<rect x="433.20" y="220.30" width="1348.30" height="34.10" rx="2.5" fill="#000" opacity="0.07" filter="url(#blur1)"/>
<rect x="433.20" y="219.30" width="1348.30" height="33.60" rx="2.5" fill="#ffffff" stroke="#dcdde2" stroke-width="1"/>
<rect x="437.50" y="224.50" width="59.00" height="23.00" rx="2" fill="#f3f3f3" stroke="#d6d6d6" stroke-width="1"/>
<rect x="447.60" y="235.60" width="4.00" height="1.20" rx="0" fill="#b39a7a"/>
<g transform="translate(512.00 230.00)"><path d="M1.15 1.15h7.5l2.2 2.2v7.5h-9.7z" fill="none" stroke="#454545" stroke-width="1.3" stroke-linejoin="round"/><rect x="2.3" y="2.2" width="5.4" height="2.3" fill="#454545"/><circle cx="5.9" cy="7.8" r="1.75" fill="#454545"/></g>
<g transform="translate(541.00 230.60)"><path d="M0.9 9.8V1.2h4.1l1.3 1.3h4.7v2" fill="none" stroke="#454545" stroke-width="1.35" stroke-linejoin="round"/><path d="M0.9 9.8l2.3-5.2h10.8l-2.3 5.2z" fill="none" stroke="#454545" stroke-width="1.35" stroke-linejoin="round"/></g>
<rect x="571.40" y="229.00" width="1.00" height="13.60" rx="0" fill="#e0e0e0"/>
<g transform="translate(587.00 230.00)"><path d="M3.6 0.9A6.2 6.2 0 0 0 3.6 11" fill="none" stroke="#2e9e3e" stroke-width="1.3"/><circle cx="10.1" cy="5.95" r="5.2" fill="none" stroke="#2e9e3e" stroke-width="1.35"/><path d="M10.1 3.2v5.5M7.35 5.95h5.5" stroke="#2e9e3e" stroke-width="1.75"/></g>
<rect x="618.40" y="229.00" width="1.00" height="13.60" rx="0" fill="#e0e0e0"/>
<g transform="translate(642.90 236.00)"><circle cx="0" cy="0" r="9.9" fill="none" stroke="#f8b0a6" stroke-width="1.6"/><circle cx="0" cy="0" r="7.3" fill="#d52519"/><path d="M-1.7 -3.1l4.2 3.1-4.2 3.1z" fill="#fff"/></g>
<rect x="663.70" y="228.10" width="77.30" height="17.10" rx="2" fill="#ffffff" stroke="#d0d0d0" stroke-width="1"/>
<text x="667.80" y="240.40" font-size="10.80" font-family="Liberation Sans" fill="#333" textLength="69.30" lengthAdjust="spacingAndGlyphs">152563records</text>
<g transform="translate(747.60 232.30)"><path d="M0.5 0.5L8.1 8.1M8.1 0.5L0.5 8.1" stroke="#d42a2a" stroke-width="1.5" fill="none"/></g>
<rect x="1673.80" y="224.80" width="22.40" height="22.40" rx="3" fill="#ffffff" stroke="#e3e3e3" stroke-width="1"/>
<g transform="translate(1679.30 229.30)"><ellipse cx="2.0" cy="2.1" rx="2.1" ry="2.9" fill="#444" transform="rotate(-12 2.0 2.1)"/><path d="M1.1 5.9l3.2 0.7-0.9 1.6-1.8-0.4z" fill="#444"/><ellipse cx="8.5" cy="7.3" rx="2.05" ry="3.0" fill="#444" transform="rotate(12 8.5 7.3)"/><path d="M6.6 11.2l3.2-0.6 0.1 1.4-2.5 0.6z" fill="#444"/></g>
<rect x="1709.50" y="229.30" width="1.00" height="13.40" rx="0" fill="#e3e3e3"/>
<rect x="1722.70" y="224.80" width="22.50" height="22.40" rx="3" fill="#eaf3fd" stroke="#bad8f6" stroke-width="1"/>
<g transform="translate(1728.00 230.80)"><rect x="0.65" y="0.65" width="10.7" height="9.2" rx="0.9" fill="none" stroke="#0b5bd3" stroke-width="1.3"/><rect x="0.65" y="0.65" width="10.7" height="1.9" fill="#0b5bd3"/><path d="M6 2v7.8M0.7 6.1h10.6" stroke="#0b5bd3" stroke-width="1.2"/></g>
<rect x="1752.70" y="224.80" width="22.50" height="22.40" rx="3" fill="#eaf3fd" stroke="#bad8f6" stroke-width="1"/>
<g transform="translate(1764.00 236.00)"><path d="M-1.99 -4.26L-1.55 -6.21L1.55 -6.21L1.99 -4.26Q1.93 -3.34 2.70 -3.85L4.60 -4.45L6.15 -1.76L4.68 -0.41Q3.85 0.00 4.68 0.41L6.15 1.76L4.60 4.45L2.70 3.85Q1.93 3.34 1.99 4.26L1.55 6.21L-1.55 6.21L-1.99 4.26Q-1.93 3.34 -2.70 3.85L-4.60 4.45L-6.15 1.76L-4.68 0.41Q-3.85 0.00 -4.68 -0.41L-6.15 -1.76L-4.60 -4.45L-2.70 -3.85Q-1.93 -3.34 -1.99 -4.26Z" fill="none" stroke="#0b5bd3" stroke-width="1.6" stroke-linejoin="round"/><rect x="-1.70" y="-1.70" width="3.40" height="3.40" rx="0.77" fill="none" stroke="#0b5bd3" stroke-width="1.44"/></g>
<rect x="433.20" y="264.30" width="1072.40" height="71.40" rx="2.5" fill="#000" opacity="0.07" filter="url(#blur1)"/>
<rect x="433.20" y="263.30" width="1072.40" height="70.90" rx="2.5" fill="#ffffff" stroke="#dcdde2" stroke-width="1"/>
<text x="461.60" y="281.30" font-size="10.50" font-family="Liberation Sans" fill="#222" textLength="32.40" lengthAdjust="spacingAndGlyphs" stroke="#222" stroke-width="0.4">TRACE</text>
<text x="645.80" y="281.30" font-size="10.50" font-family="Liberation Sans" fill="#222" textLength="32.00" lengthAdjust="spacingAndGlyphs" stroke="#222" stroke-width="0.4">VALUE</text>
<text x="725.50" y="281.30" font-size="10.50" font-family="Liberation Sans" fill="#222" textLength="20.70" lengthAdjust="spacingAndGlyphs" stroke="#222" stroke-width="0.4">MIN</text>
<text x="798.30" y="281.30" font-size="10.50" font-family="Liberation Sans" fill="#222" textLength="22.00" lengthAdjust="spacingAndGlyphs" stroke="#222" stroke-width="0.4">MAX</text>
<text x="870.30" y="281.30" font-size="10.50" font-family="Liberation Sans" fill="#222" textLength="51.40" lengthAdjust="spacingAndGlyphs" stroke="#222" stroke-width="0.4">SELECTED</text>
<text x="1434.50" y="281.30" font-size="10.50" font-family="Liberation Sans" fill="#222" textLength="41.80" lengthAdjust="spacingAndGlyphs" stroke="#222" stroke-width="0.4">MAPPED</text>
<rect x="437.10" y="288.20" width="1064.90" height="20.60" rx="0" fill="#f3f3f3"/>
<g transform="translate(443.30 295.10)"><path d="M0.7 6.8L4.12 2.25L7.00 5.25L11.8 0.7" fill="none" stroke="#2b6cb0" stroke-width="1.4" stroke-linejoin="round" stroke-linecap="round"/></g>
<text x="461.60" y="302.70" font-size="11.80" font-family="Liberation Sans" fill="#2b6cb0" textLength="166.10" lengthAdjust="spacingAndGlyphs">Controller 0: SampleCounter</text>
<text x="645.80" y="302.50" font-size="11.80" font-family="Liberation Sans" fill="#1f1f1f" textLength="51.70" lengthAdjust="spacingAndGlyphs">19665419</text>
<text x="725.50" y="302.50" font-size="11.80" font-family="Liberation Sans" fill="#474747">19593430</text>
<text x="798.30" y="302.50" font-size="11.80" font-family="Liberation Sans" fill="#474747" textLength="50.90" lengthAdjust="spacingAndGlyphs">19623561</text>
<text x="870.30" y="302.50" font-size="11.80" font-family="Liberation Sans" fill="#474747" textLength="24.70" lengthAdjust="spacingAndGlyphs">True</text>
<g transform="translate(443.30 316.10)"><path d="M0.7 6.8L4.12 2.25L7.00 5.25L11.8 0.7" fill="none" stroke="#f57c1f" stroke-width="1.4" stroke-linejoin="round" stroke-linecap="round"/></g>
<text x="461.60" y="323.80" font-size="11.80" font-family="Liberation Sans" fill="#f57c1f" textLength="132.40" lengthAdjust="spacingAndGlyphs">Controller 0: Signature</text>
<text x="645.80" y="323.70" font-size="11.80" font-family="Liberation Sans" fill="#1f1f1f" textLength="53.40" lengthAdjust="spacingAndGlyphs">12648430</text>
<text x="725.50" y="323.70" font-size="11.80" font-family="Liberation Sans" fill="#474747" textLength="53.40" lengthAdjust="spacingAndGlyphs">12648430</text>
<text x="798.30" y="323.70" font-size="11.80" font-family="Liberation Sans" fill="#474747" textLength="53.40" lengthAdjust="spacingAndGlyphs">12648430</text>
<text x="870.30" y="323.70" font-size="11.80" font-family="Liberation Sans" fill="#474747" textLength="29.70" lengthAdjust="spacingAndGlyphs">False</text>
<rect x="1442.80" y="291.80" width="26.50" height="13.40" rx="2" fill="#eef8ee" stroke="#9fd89f" stroke-width="1"/>
<text x="1446.30" y="302.20" font-size="10.00" font-family="Liberation Sans" fill="#3a9a3a" textLength="19.60" lengthAdjust="spacingAndGlyphs">True</text>
<g transform="translate(1487.60 294.60)"><path d="M0.5 0.5L8.5 8.5M8.5 0.5L0.5 8.5" stroke="#d42a2a" stroke-width="1.4" fill="none"/></g>
<rect x="1442.80" y="312.80" width="26.50" height="13.40" rx="2" fill="#eef8ee" stroke="#9fd89f" stroke-width="1"/>
<text x="1446.30" y="323.20" font-size="10.00" font-family="Liberation Sans" fill="#3a9a3a" textLength="19.60" lengthAdjust="spacingAndGlyphs">True</text>
<g transform="translate(1487.60 315.60)"><path d="M0.5 0.5L8.5 8.5M8.5 0.5L0.5 8.5" stroke="#d42a2a" stroke-width="1.4" fill="none"/></g>
<rect x="433.20" y="346.00" width="1072.40" height="505.50" rx="2.5" fill="#000" opacity="0.07" filter="url(#blur1)"/>
<rect x="433.20" y="345.00" width="1072.40" height="505.00" rx="2.5" fill="#ffffff" stroke="#dcdde2" stroke-width="1"/>
<defs><clipPath id="plot"><rect x="527" y="346" width="979" height="480"/></clipPath></defs>
<g clip-path="url(#plot)"><line x1="557.4" y1="352" x2="557.4" y2="826" stroke="#dcdcdc" stroke-width="1" stroke-dasharray="3 5"/><line x1="628.8" y1="352" x2="628.8" y2="826" stroke="#dcdcdc" stroke-width="1" stroke-dasharray="3 5"/><line x1="700.2" y1="352" x2="700.2" y2="826" stroke="#dcdcdc" stroke-width="1" stroke-dasharray="3 5"/><line x1="771.5" y1="352" x2="771.5" y2="826" stroke="#dcdcdc" stroke-width="1" stroke-dasharray="3 5"/><line x1="842.9" y1="352" x2="842.9" y2="826" stroke="#dcdcdc" stroke-width="1" stroke-dasharray="3 5"/><line x1="914.3" y1="352" x2="914.3" y2="826" stroke="#dcdcdc" stroke-width="1" stroke-dasharray="3 5"/><line x1="985.7" y1="352" x2="985.7" y2="826" stroke="#dcdcdc" stroke-width="1" stroke-dasharray="3 5"/><line x1="1057.1" y1="352" x2="1057.1" y2="826" stroke="#dcdcdc" stroke-width="1" stroke-dasharray="3 5"/><line x1="1128.4" y1="352" x2="1128.4" y2="826" stroke="#dcdcdc" stroke-width="1" stroke-dasharray="3 5"/><line x1="1199.8" y1="352" x2="1199.8" y2="826" stroke="#dcdcdc" stroke-width="1" stroke-dasharray="3 5"/><line x1="1271.2" y1="352" x2="1271.2" y2="826" stroke="#dcdcdc" stroke-width="1" stroke-dasharray="3 5"/><line x1="1342.6" y1="352" x2="1342.6" y2="826" stroke="#dcdcdc" stroke-width="1" stroke-dasharray="3 5"/><line x1="1414.0" y1="352" x2="1414.0" y2="826" stroke="#dcdcdc" stroke-width="1" stroke-dasharray="3 5"/><line x1="1485.3" y1="352" x2="1485.3" y2="826" stroke="#dcdcdc" stroke-width="1" stroke-dasharray="3 5"/><line x1="527" y1="360.5" x2="1506" y2="360.5" stroke="#dcdcdc" stroke-width="1" stroke-dasharray="3 5"/><line x1="527" y1="401.4" x2="1506" y2="401.4" stroke="#dcdcdc" stroke-width="1" stroke-dasharray="3 5"/><line x1="527" y1="442.2" x2="1506" y2="442.2" stroke="#dcdcdc" stroke-width="1" stroke-dasharray="3 5"/><line x1="527" y1="483.1" x2="1506" y2="483.1" stroke="#dcdcdc" stroke-width="1" stroke-dasharray="3 5"/><line x1="527" y1="523.9" x2="1506" y2="523.9" stroke="#dcdcdc" stroke-width="1" stroke-dasharray="3 5"/><line x1="527" y1="564.8" x2="1506" y2="564.8" stroke="#dcdcdc" stroke-width="1" stroke-dasharray="3 5"/><line x1="527" y1="605.6" x2="1506" y2="605.6" stroke="#dcdcdc" stroke-width="1" stroke-dasharray="3 5"/><line x1="527" y1="646.5" x2="1506" y2="646.5" stroke="#dcdcdc" stroke-width="1" stroke-dasharray="3 5"/><line x1="527" y1="687.3" x2="1506" y2="687.3" stroke="#dcdcdc" stroke-width="1" stroke-dasharray="3 5"/><line x1="527" y1="728.2" x2="1506" y2="728.2" stroke="#dcdcdc" stroke-width="1" stroke-dasharray="3 5"/><line x1="527" y1="769.0" x2="1506" y2="769.0" stroke="#dcdcdc" stroke-width="1" stroke-dasharray="3 5"/><line x1="527" y1="809.9" x2="1506" y2="809.9" stroke="#dcdcdc" stroke-width="1" stroke-dasharray="3 5"/><g opacity="0.22"><line x1="527" y1="597" x2="1506" y2="597" stroke="#ff7f0e" stroke-width="2.2"/><circle cx="528.85" cy="597" r="4.95" fill="#ff7f0e"/><circle cx="628.78" cy="597" r="4.95" fill="#ff7f0e"/><circle cx="643.06" cy="597" r="4.95" fill="#ff7f0e"/><circle cx="657.33" cy="597" r="4.95" fill="#ff7f0e"/><circle cx="671.61" cy="597" r="4.95" fill="#ff7f0e"/><circle cx="685.88" cy="597" r="4.95" fill="#ff7f0e"/><circle cx="700.16" cy="597" r="4.95" fill="#ff7f0e"/><circle cx="714.44" cy="597" r="4.95" fill="#ff7f0e"/><circle cx="728.71" cy="597" r="4.95" fill="#ff7f0e"/><circle cx="742.99" cy="597" r="4.95" fill="#ff7f0e"/><circle cx="757.26" cy="597" r="4.95" fill="#ff7f0e"/><circle cx="771.54" cy="597" r="4.95" fill="#ff7f0e"/><circle cx="785.82" cy="597" r="4.95" fill="#ff7f0e"/><circle cx="800.09" cy="597" r="4.95" fill="#ff7f0e"/><circle cx="814.37" cy="597" r="4.95" fill="#ff7f0e"/><circle cx="828.64" cy="597" r="4.95" fill="#ff7f0e"/><circle cx="842.92" cy="597" r="4.95" fill="#ff7f0e"/><circle cx="857.20" cy="597" r="4.95" fill="#ff7f0e"/><circle cx="1114.16" cy="597" r="4.95" fill="#ff7f0e"/><circle cx="1128.44" cy="597" r="4.95" fill="#ff7f0e"/><circle cx="1142.72" cy="597" r="4.95" fill="#ff7f0e"/><circle cx="1156.99" cy="597" r="4.95" fill="#ff7f0e"/><circle cx="1171.27" cy="597" r="4.95" fill="#ff7f0e"/><circle cx="1185.54" cy="597" r="4.95" fill="#ff7f0e"/><circle cx="1199.82" cy="597" r="4.95" fill="#ff7f0e"/><circle cx="1214.10" cy="597" r="4.95" fill="#ff7f0e"/><circle cx="1228.37" cy="597" r="4.95" fill="#ff7f0e"/><circle cx="1242.65" cy="597" r="4.95" fill="#ff7f0e"/><circle cx="1256.92" cy="597" r="4.95" fill="#ff7f0e"/><circle cx="1271.20" cy="597" r="4.95" fill="#ff7f0e"/><circle cx="1285.48" cy="597" r="4.95" fill="#ff7f0e"/><circle cx="1299.75" cy="597" r="4.95" fill="#ff7f0e"/></g><line x1="527" y1="589.1" x2="1506" y2="589.1" stroke="#1f77b4" stroke-width="2.3"/><circle cx="528.85" cy="589.1" r="4.95" fill="#1f77b4"/><circle cx="628.78" cy="589.1" r="4.95" fill="#1f77b4"/><circle cx="643.06" cy="589.1" r="4.95" fill="#1f77b4"/><circle cx="657.33" cy="589.1" r="4.95" fill="#1f77b4"/><circle cx="671.61" cy="589.1" r="4.95" fill="#1f77b4"/><circle cx="685.88" cy="589.1" r="4.95" fill="#1f77b4"/><circle cx="700.16" cy="589.1" r="4.95" fill="#1f77b4"/><circle cx="714.44" cy="589.1" r="4.95" fill="#1f77b4"/><circle cx="728.71" cy="589.1" r="4.95" fill="#1f77b4"/><circle cx="742.99" cy="589.1" r="4.95" fill="#1f77b4"/><circle cx="757.26" cy="589.1" r="4.95" fill="#1f77b4"/><circle cx="771.54" cy="589.1" r="4.95" fill="#1f77b4"/><circle cx="785.82" cy="589.1" r="4.95" fill="#1f77b4"/><circle cx="800.09" cy="589.1" r="4.95" fill="#1f77b4"/><circle cx="814.37" cy="589.1" r="4.95" fill="#1f77b4"/><circle cx="828.64" cy="589.1" r="4.95" fill="#1f77b4"/><circle cx="842.92" cy="589.1" r="4.95" fill="#1f77b4"/><circle cx="857.20" cy="589.1" r="4.95" fill="#1f77b4"/><circle cx="1114.16" cy="589.1" r="4.95" fill="#1f77b4"/><circle cx="1128.44" cy="589.1" r="4.95" fill="#1f77b4"/><circle cx="1142.72" cy="589.1" r="4.95" fill="#1f77b4"/><circle cx="1156.99" cy="589.1" r="4.95" fill="#1f77b4"/><circle cx="1171.27" cy="589.1" r="4.95" fill="#1f77b4"/><circle cx="1185.54" cy="589.1" r="4.95" fill="#1f77b4"/><circle cx="1199.82" cy="589.1" r="4.95" fill="#1f77b4"/><circle cx="1214.10" cy="589.1" r="4.95" fill="#1f77b4"/><circle cx="1228.37" cy="589.1" r="4.95" fill="#1f77b4"/><circle cx="1242.65" cy="589.1" r="4.95" fill="#1f77b4"/><circle cx="1256.92" cy="589.1" r="4.95" fill="#1f77b4"/><circle cx="1271.20" cy="589.1" r="4.95" fill="#1f77b4"/><circle cx="1285.48" cy="589.1" r="4.95" fill="#1f77b4"/><circle cx="1299.75" cy="589.1" r="4.95" fill="#1f77b4"/></g>
<text x="522.20" y="364.40" font-size="11.90" font-family="Liberation Mono" fill="#1f6fb2" text-anchor="end" textLength="72.10" lengthAdjust="spacingAndGlyphs" stroke="#1f6fb2" stroke-width="0.35">300,000,000</text>
<text x="522.20" y="405.25" font-size="11.90" font-family="Liberation Mono" fill="#1f6fb2" text-anchor="end" textLength="72.10" lengthAdjust="spacingAndGlyphs" stroke="#1f6fb2" stroke-width="0.35">250,000,000</text>
<text x="522.20" y="446.10" font-size="11.90" font-family="Liberation Mono" fill="#1f6fb2" text-anchor="end" textLength="72.10" lengthAdjust="spacingAndGlyphs" stroke="#1f6fb2" stroke-width="0.35">200,000,000</text>
<text x="522.20" y="486.95" font-size="11.90" font-family="Liberation Mono" fill="#1f6fb2" text-anchor="end" textLength="72.10" lengthAdjust="spacingAndGlyphs" stroke="#1f6fb2" stroke-width="0.35">150,000,000</text>
<text x="522.20" y="527.80" font-size="11.90" font-family="Liberation Mono" fill="#1f6fb2" text-anchor="end" textLength="72.10" lengthAdjust="spacingAndGlyphs" stroke="#1f6fb2" stroke-width="0.35">100,000,000</text>
<text x="522.20" y="568.65" font-size="11.90" font-family="Liberation Mono" fill="#1f6fb2" text-anchor="end" textLength="65.55" lengthAdjust="spacingAndGlyphs" stroke="#1f6fb2" stroke-width="0.35">50,000,000</text>
<text x="522.20" y="609.50" font-size="11.90" font-family="Liberation Mono" fill="#1f6fb2" text-anchor="end" textLength="6.55" lengthAdjust="spacingAndGlyphs" stroke="#1f6fb2" stroke-width="0.35">0</text>
<text x="522.20" y="650.35" font-size="11.90" font-family="Liberation Mono" fill="#1f6fb2" text-anchor="end" textLength="72.10" lengthAdjust="spacingAndGlyphs" stroke="#1f6fb2" stroke-width="0.35">-50,000,000</text>
<text x="522.20" y="691.20" font-size="11.90" font-family="Liberation Mono" fill="#1f6fb2" text-anchor="end" textLength="78.66" lengthAdjust="spacingAndGlyphs" stroke="#1f6fb2" stroke-width="0.35">-100,000,000</text>
<text x="522.20" y="732.05" font-size="11.90" font-family="Liberation Mono" fill="#1f6fb2" text-anchor="end" textLength="78.66" lengthAdjust="spacingAndGlyphs" stroke="#1f6fb2" stroke-width="0.35">-150,000,000</text>
<text x="522.20" y="772.90" font-size="11.90" font-family="Liberation Mono" fill="#1f6fb2" text-anchor="end" textLength="78.66" lengthAdjust="spacingAndGlyphs" stroke="#1f6fb2" stroke-width="0.35">-200,000,000</text>
<text x="522.20" y="813.75" font-size="11.90" font-family="Liberation Mono" fill="#1f6fb2" text-anchor="end" textLength="78.66" lengthAdjust="spacingAndGlyphs" stroke="#1f6fb2" stroke-width="0.35">-250,000,000</text>
<text x="557.40" y="836.60" font-size="11.20" font-family="Liberation Mono" fill="#111" text-anchor="middle" textLength="39.30" lengthAdjust="spacingAndGlyphs" stroke="#111" stroke-width="0.4">78,440</text>
<text x="628.78" y="836.60" font-size="11.20" font-family="Liberation Mono" fill="#111" text-anchor="middle" textLength="39.30" lengthAdjust="spacingAndGlyphs" stroke="#111" stroke-width="0.4">78,445</text>
<text x="700.16" y="836.60" font-size="11.20" font-family="Liberation Mono" fill="#111" text-anchor="middle" textLength="39.30" lengthAdjust="spacingAndGlyphs" stroke="#111" stroke-width="0.4">78,450</text>
<text x="771.54" y="836.60" font-size="11.20" font-family="Liberation Mono" fill="#111" text-anchor="middle" textLength="39.30" lengthAdjust="spacingAndGlyphs" stroke="#111" stroke-width="0.4">78,455</text>
<text x="842.92" y="836.60" font-size="11.20" font-family="Liberation Mono" fill="#111" text-anchor="middle" textLength="39.30" lengthAdjust="spacingAndGlyphs" stroke="#111" stroke-width="0.4">78,460</text>
<text x="914.30" y="836.60" font-size="11.20" font-family="Liberation Mono" fill="#111" text-anchor="middle" textLength="39.30" lengthAdjust="spacingAndGlyphs" stroke="#111" stroke-width="0.4">78,465</text>
<text x="985.68" y="836.60" font-size="11.20" font-family="Liberation Mono" fill="#111" text-anchor="middle" textLength="39.30" lengthAdjust="spacingAndGlyphs" stroke="#111" stroke-width="0.4">78,470</text>
<text x="1057.06" y="836.60" font-size="11.20" font-family="Liberation Mono" fill="#111" text-anchor="middle" textLength="39.30" lengthAdjust="spacingAndGlyphs" stroke="#111" stroke-width="0.4">78,475</text>
<text x="1128.44" y="836.60" font-size="11.20" font-family="Liberation Mono" fill="#111" text-anchor="middle" textLength="39.30" lengthAdjust="spacingAndGlyphs" stroke="#111" stroke-width="0.4">78,480</text>
<text x="1199.82" y="836.60" font-size="11.20" font-family="Liberation Mono" fill="#111" text-anchor="middle" textLength="39.30" lengthAdjust="spacingAndGlyphs" stroke="#111" stroke-width="0.4">78,485</text>
<text x="1271.20" y="836.60" font-size="11.20" font-family="Liberation Mono" fill="#111" text-anchor="middle" textLength="39.30" lengthAdjust="spacingAndGlyphs" stroke="#111" stroke-width="0.4">78,490</text>
<text x="1342.58" y="836.60" font-size="11.20" font-family="Liberation Mono" fill="#111" text-anchor="middle" textLength="39.30" lengthAdjust="spacingAndGlyphs" stroke="#111" stroke-width="0.4">78,495</text>
<text x="1413.96" y="836.60" font-size="11.20" font-family="Liberation Mono" fill="#111" text-anchor="middle" textLength="39.30" lengthAdjust="spacingAndGlyphs" stroke="#111" stroke-width="0.4">78,500</text>
<text x="1485.34" y="836.60" font-size="11.20" font-family="Liberation Mono" fill="#111" text-anchor="middle" textLength="39.30" lengthAdjust="spacingAndGlyphs" stroke="#111" stroke-width="0.4">78,505</text>
<g transform="translate(1484.10 355.00)"><path d="M0.7 4.9V0.7H4.9M7.1 0.7h4.2V4.9M11.3 7.1v4.2H7.1M4.9 11.3H0.7V7.1" fill="none" stroke="#15171c" stroke-width="1.4"/><path d="M1.2 1.2l3.6 3.6M10.8 1.2L7.2 4.8M10.8 10.8L7.2 7.2M1.2 10.8l3.6-3.6" stroke="#15171c" stroke-width="1.2"/></g>
<rect x="1516.40" y="264.30" width="265.50" height="587.20" rx="2.5" fill="#000" opacity="0.07" filter="url(#blur1)"/>
<rect x="1516.40" y="263.30" width="265.50" height="586.70" rx="2.5" fill="#ffffff" stroke="#dcdde2" stroke-width="1"/>
<g transform="translate(1534.80 280.80)"><circle cx="0" cy="0" r="5.4" fill="none" stroke="#174a7c" stroke-width="1.3"/><circle cx="0" cy="0" r="3.1" fill="#174a7c"/></g>
<text x="1550.80" y="285.30" font-size="12.60" font-family="Liberation Sans" fill="#174a7c" font-weight="bold" textLength="47.00" lengthAdjust="spacingAndGlyphs">Records</text>
<g transform="translate(1759.90 278.80)"><path d="M0.5 4.7L4.1 0.5L7.699999999999999 4.7" fill="none" stroke="#333" stroke-width="1.3"/></g>
<text x="1528.50" y="319.00" font-size="12.60" font-family="Liberation Sans" fill="#2a2a2a">Period</text>
<text x="1572.20" y="319.00" font-size="12.50" font-family="Liberation Serif" fill="#c9c9c9" font-style="italic">i</text>
<rect x="1690.60" y="303.80" width="78.50" height="22.30" rx="2" fill="#f3f3f3" stroke="#d8d8d8" stroke-width="1"/>
<text x="1695.30" y="319.80" font-size="12.40" font-family="Liberation Sans" fill="#222" textLength="5.50" lengthAdjust="spacingAndGlyphs">1</text>
<text x="1528.50" y="351.30" font-size="12.60" font-family="Liberation Sans" fill="#2a2a2a">Count</text>
<text x="1568.20" y="351.30" font-size="12.50" font-family="Liberation Serif" fill="#c9c9c9" font-style="italic">i</text>
<rect x="1690.60" y="335.70" width="78.50" height="22.30" rx="2" fill="#f3f3f3" stroke="#d8d8d8" stroke-width="1"/>
<text x="1695.30" y="351.70" font-size="12.40" font-family="Liberation Sans" fill="#222" textLength="36.10" lengthAdjust="spacingAndGlyphs">10000</text>
<text x="1528.50" y="381.30" font-size="12.60" font-family="Liberation Sans" fill="#2a2a2a" textLength="43.80" lengthAdjust="spacingAndGlyphs">Recycle</text>
<text x="1579.60" y="381.30" font-size="12.50" font-family="Liberation Serif" fill="#c9c9c9" font-style="italic">i</text>
<g transform="translate(1753.90 369.00)"><rect x="0" y="0" width="16" height="16" rx="1.5" fill="#3b82f0"/><path d="M3.8 8.2l2.9 2.7 5.4-5.5" fill="none" stroke="#fff" stroke-width="1.6" stroke-linecap="round" stroke-linejoin="round"/></g>
<text x="1528.50" y="411.00" font-size="12.60" font-family="Liberation Sans" fill="#2a2a2a" textLength="82.40" lengthAdjust="spacingAndGlyphs">X-Axis Format</text>
<text x="1617.90" y="411.00" font-size="12.50" font-family="Liberation Serif" fill="#c9c9c9" font-style="italic">i</text>
<rect x="1631.80" y="395.80" width="137.30" height="22.20" rx="2" fill="#f2f2f2" stroke="#d8d8d8" stroke-width="1"/>
<rect x="1689.80" y="398.00" width="36.60" height="18.10" rx="2" fill="#ffffff" stroke="#dcdcdc" stroke-width="1"/>
<text x="1638.30" y="411.00" font-size="12.60" font-family="Liberation Sans" fill="#2a2a2a">Sample</text>
<text x="1694.30" y="411.00" font-size="12.60" font-family="Liberation Sans" fill="#222" textLength="26.60" lengthAdjust="spacingAndGlyphs">Zero</text>
<text x="1734.40" y="411.00" font-size="12.60" font-family="Liberation Sans" fill="#2a2a2a">Time</text>
<text x="1528.50" y="442.80" font-size="12.60" font-family="Liberation Sans" fill="#2a2a2a" textLength="70.30" lengthAdjust="spacingAndGlyphs">Polling Rate</text>
<text x="1606.20" y="442.80" font-size="12.50" font-family="Liberation Serif" fill="#c9c9c9" font-style="italic">i</text>
<rect x="1690.60" y="427.70" width="78.50" height="22.30" rx="2" fill="#f3f3f3" stroke="#d8d8d8" stroke-width="1"/>
<text x="1695.30" y="443.70" font-size="12.40" font-family="Liberation Sans" fill="#222">60</text>
<text x="1764.40" y="442.80" font-size="12.40" font-family="Liberation Sans" fill="#2a2a2a" text-anchor="end" textLength="13.10" lengthAdjust="spacingAndGlyphs">Hz</text>
<text x="1528.50" y="475.80" font-size="12.60" font-family="Liberation Sans" fill="#2a2a2a">Reset Recorder</text>
<text x="1623.90" y="475.80" font-size="12.50" font-family="Liberation Serif" fill="#c9c9c9" font-style="italic">i</text>
<rect x="1744.10" y="459.30" width="25.50" height="25.30" rx="3" fill="#fbdcdc"/>
<g transform="translate(1756.90 472.10)"><path d="M4.3 -2.4A5 5 0 1 0 5 1.2" fill="none" stroke="#d23c3c" stroke-width="1.5"/><path d="M5.6 -5.2v3.6h-3.6" fill="none" stroke="#d23c3c" stroke-width="1.5" stroke-linejoin="round"/></g>
<rect x="1516.90" y="497.60" width="265.00" height="1.00" rx="0" fill="#dcdde2"/>
<g transform="translate(1528.90 510.40)"><path d="M6.4 1.4A5.3 5.3 0 1 1 1.3 5.4" fill="none" stroke="#174a7c" stroke-width="1.35"/><path d="M6.4 3.7L6.4 0.3M6.4 6.5L3.8 4" stroke="#174a7c" stroke-width="1.35"/><circle cx="6.4" cy="6.6" r="0.9" fill="#174a7c"/></g>
<text x="1550.80" y="521.30" font-size="12.60" font-family="Liberation Sans" fill="#174a7c" font-weight="bold" textLength="49.20" lengthAdjust="spacingAndGlyphs">Triggers</text>
<g transform="translate(1759.90 514.60)"><path d="M0.5 0.5L4.1 4.5L7.699999999999999 0.5" fill="none" stroke="#333" stroke-width="1.3"/></g>
<rect x="1516.90" y="533.90" width="265.00" height="1.00" rx="0" fill="#dcdde2"/>
<g transform="translate(1528.80 547.60)"><path d="M0.7 0v10.2H12.7" fill="none" stroke="#174a7c" stroke-width="1.3"/><path d="M2.5 8.3l3.2-4.2 2.5 2.4 4.3-5" fill="none" stroke="#174a7c" stroke-width="1.3"/></g>
<text x="1550.80" y="557.00" font-size="12.60" font-family="Liberation Sans" fill="#174a7c" font-weight="bold" textLength="22.80" lengthAdjust="spacingAndGlyphs">Plot</text>
<g transform="translate(1759.90 550.30)"><path d="M0.5 0.5L4.1 4.5L7.699999999999999 0.5" fill="none" stroke="#333" stroke-width="1.3"/></g>
<rect x="1516.90" y="569.70" width="265.00" height="1.00" rx="0" fill="#dcdde2"/>
<g transform="translate(1528.60 585.30)"><path d="M0.7 6.5L4.22 2.16L7.17 5.04L12.100000000000001 0.7" fill="none" stroke="#174a7c" stroke-width="1.6" stroke-linejoin="round" stroke-linecap="round"/></g>
<text x="1550.80" y="593.00" font-size="12.60" font-family="Liberation Sans" fill="#174a7c" font-weight="bold" textLength="38.30" lengthAdjust="spacingAndGlyphs">Traces</text>
<g transform="translate(1759.90 586.60)"><path d="M0.5 4.7L4.1 0.5L7.699999999999999 4.7" fill="none" stroke="#333" stroke-width="1.3"/></g>
<text x="1528.50" y="626.80" font-size="12.60" font-family="Liberation Sans" fill="#2a2a2a">Tracker</text>
<text x="1577.70" y="626.80" font-size="12.50" font-family="Liberation Serif" fill="#c9c9c9" font-style="italic">i</text>
<g transform="translate(1753.90 615.10)"><rect x="0" y="0" width="16" height="16" rx="1.5" fill="#3b82f0"/><path d="M3.8 8.2l2.9 2.7 5.4-5.5" fill="none" stroke="#fff" stroke-width="1.6" stroke-linecap="round" stroke-linejoin="round"/></g>
<text x="1528.50" y="658.80" font-size="12.60" font-family="Liberation Sans" fill="#2a2a2a" textLength="50.60" lengthAdjust="spacingAndGlyphs">Line Size</text>
<text x="1586.40" y="658.80" font-size="12.50" font-family="Liberation Serif" fill="#c9c9c9" font-style="italic">i</text>
<rect x="1690.60" y="643.80" width="78.50" height="22.30" rx="2" fill="#f3f3f3" stroke="#d8d8d8" stroke-width="1"/>
<text x="1695.30" y="659.80" font-size="12.40" font-family="Liberation Sans" fill="#222">2</text>
<text x="1734.40" y="658.80" font-size="12.40" font-family="Liberation Sans" fill="#2a2a2a" textLength="13.50" lengthAdjust="spacingAndGlyphs">px</text>
<g transform="translate(1755.80 648.40)"><path d="M0.5 4L4 0.8 7.5 4" fill="none" stroke="#555" stroke-width="1.1"/><path d="M0.5 10L4 13.2 7.5 10" fill="none" stroke="#555" stroke-width="1.1"/></g>
<text x="1528.50" y="690.90" font-size="12.60" font-family="Liberation Sans" fill="#2a2a2a" textLength="70.60" lengthAdjust="spacingAndGlyphs">Line Pattern</text>
<text x="1606.40" y="690.90" font-size="12.50" font-family="Liberation Serif" fill="#c9c9c9" font-style="italic">i</text>
<rect x="1690.60" y="675.80" width="78.50" height="22.50" rx="2" fill="#f3f3f3" stroke="#d8d8d8" stroke-width="1"/>
<text x="1695.30" y="691.60" font-size="12.40" font-family="Liberation Sans" fill="#222" textLength="28.70" lengthAdjust="spacingAndGlyphs">Solid</text>
<g transform="translate(1756.40 684.80)"><path d="M0.5 0.5L4.0 4.1L7.5 0.5" fill="none" stroke="#444" stroke-width="1.1"/></g>
<text x="1528.50" y="722.70" font-size="12.60" font-family="Liberation Sans" fill="#2a2a2a" textLength="65.70" lengthAdjust="spacingAndGlyphs">Marker Size</text>
<text x="1601.50" y="722.70" font-size="12.50" font-family="Liberation Serif" fill="#c9c9c9" font-style="italic">i</text>
<rect x="1690.60" y="708.00" width="78.50" height="22.30" rx="2" fill="#f3f3f3" stroke="#d8d8d8" stroke-width="1"/>
<text x="1695.30" y="724.00" font-size="12.40" font-family="Liberation Sans" fill="#222">10</text>
<text x="1734.40" y="722.70" font-size="12.40" font-family="Liberation Sans" fill="#2a2a2a" textLength="13.50" lengthAdjust="spacingAndGlyphs">px</text>
<g transform="translate(1755.80 712.50)"><path d="M0.5 4L4 0.8 7.5 4" fill="none" stroke="#c4c4c4" stroke-width="1.1"/><path d="M0.5 10L4 13.2 7.5 10" fill="none" stroke="#555" stroke-width="1.1"/></g>
<text x="1528.50" y="754.90" font-size="12.60" font-family="Liberation Sans" fill="#2a2a2a" textLength="144.30" lengthAdjust="spacingAndGlyphs">Unselected Line Visibility</text>
<text x="1680.00" y="754.90" font-size="12.50" font-family="Liberation Serif" fill="#c9c9c9" font-style="italic">i</text>
<rect x="1690.60" y="739.90" width="78.50" height="22.30" rx="2" fill="#f3f3f3" stroke="#d8d8d8" stroke-width="1"/>
<text x="1695.30" y="755.90" font-size="12.40" font-family="Liberation Sans" fill="#222">20</text>
<text x="1747.70" y="754.90" font-size="12.40" font-family="Liberation Sans" fill="#2a2a2a" text-anchor="end" textLength="9.60" lengthAdjust="spacingAndGlyphs">%</text>
<g transform="translate(1755.80 744.50)"><path d="M0.5 4L4 0.8 7.5 4" fill="none" stroke="#555" stroke-width="1.1"/><path d="M0.5 10L4 13.2 7.5 10" fill="none" stroke="#555" stroke-width="1.1"/></g>
<rect x="1516.90" y="776.10" width="265.00" height="1.00" rx="0" fill="#dcdde2"/>
<rect x="416.00" y="866.10" width="1383.00" height="298.90" rx="0" fill="#ffffff"/>
<rect x="416.00" y="865.60" width="1383.00" height="1.00" rx="0" fill="#d6d7dc"/>
<text x="432.50" y="894.00" font-size="15.40" font-family="Liberation Sans" fill="#1f232a" textLength="45.90" lengthAdjust="spacingAndGlyphs">Watch</text>
<rect x="492.70" y="878.00" width="138.50" height="21.80" rx="2" fill="#f2f2f2" stroke="#d8d8d8" stroke-width="1"/>
<rect x="571.80" y="879.90" width="57.30" height="18.10" rx="2" fill="#ffffff" stroke="#dcdcdc" stroke-width="1"/>
<text x="499.40" y="893.10" font-size="12.30" font-family="Liberation Sans" fill="#2a2a2a" textLength="63.50" lengthAdjust="spacingAndGlyphs">RapidCode</text>
<text x="576.20" y="893.10" font-size="12.30" font-family="Liberation Sans" fill="#222" textLength="47.70" lengthAdjust="spacingAndGlyphs">Memory</text>
<rect x="646.30" y="881.60" width="1.00" height="14.00" rx="0" fill="#d8d8d8"/>
<rect x="661.80" y="878.00" width="178.10" height="21.80" rx="2" fill="#f3f3f3" stroke="#d8d8d8" stroke-width="1"/>
<g transform="translate(667.80 883.20)"><circle cx="4.6" cy="4.6" r="3.9" fill="none" stroke="#555" stroke-width="1.4"/><path d="M7.5 7.5l3.6 3.6" stroke="#555" stroke-width="1.5" stroke-linecap="round"/></g>
<text x="686.60" y="893.40" font-size="12.30" font-family="Liberation Sans" fill="#a6a6a6" textLength="37.50" lengthAdjust="spacingAndGlyphs">Search</text>
<rect x="849.90" y="877.90" width="78.00" height="22.00" rx="2" fill="#f3f3f3" stroke="#d8d8d8" stroke-width="1"/>
<text x="855.00" y="893.60" font-size="12.30" font-family="Liberation Sans" fill="#6e6e6e" font-style="italic" textLength="44.40" lengthAdjust="spacingAndGlyphs">Objects</text>
<g transform="translate(915.00 886.60)"><path d="M0.5 0.5L4.0 4.5L7.5 0.5" fill="none" stroke="#555" stroke-width="1.2"/></g>
<rect x="937.90" y="877.90" width="78.00" height="22.00" rx="2" fill="#f3f3f3" stroke="#d8d8d8" stroke-width="1"/>
<text x="943.00" y="893.60" font-size="12.30" font-family="Liberation Sans" fill="#6e6e6e" font-style="italic" textLength="47.00" lengthAdjust="spacingAndGlyphs">Indexes</text>
<g transform="translate(1003.00 886.60)"><path d="M0.5 0.5L4.0 4.5L7.5 0.5" fill="none" stroke="#555" stroke-width="1.2"/></g>
<g transform="translate(1026.40 883.10)"><path d="M4.2 0.7h10.6a1 1 0 0 1 1 1v7.6a1 1 0 0 1-1 1H4.2L0.8 5.5z" fill="none" stroke="#444" stroke-width="1.3" stroke-linejoin="round"/><path d="M7.4 3l5 5M12.4 3l-5 5" stroke="#444" stroke-width="1.4"/></g>
<g transform="translate(1061.00 882.10)"><path d="M0.7 0.7h10.2L7 5.6v5.3L4.6 9.5V5.6z" fill="none" stroke="#444" stroke-width="1.3" stroke-linejoin="round"/><path d="M9.4 7.8l4 4M13.4 7.8l-4 4" stroke="#444" stroke-width="1.5"/></g>
<rect x="1708.00" y="878.00" width="22.10" height="22.00" rx="3" fill="#ffffff" stroke="#e2e2e2" stroke-width="1"/>
<g transform="translate(1710.60 880.90)"><path d="M0.2 3.1h6.2M9.9 3.1h6.6M13.2 0v6.4" stroke="#444" stroke-width="1.7"/><path d="M0.8 10.2l4.9 5M5.7 10.2l-4.9 5" stroke="#444" stroke-width="1.7"/><path d="M16.2 9.4l-3.6 6.6" stroke="#444" stroke-width="1.5"/></g>
<rect x="1745.30" y="881.00" width="1.00" height="15.00" rx="0" fill="#d8d8d8"/>
<g transform="translate(1768.00 883.90)"><path d="M0.5 0.5L8.7 8.7M8.7 0.5L0.5 8.7" stroke="#444" stroke-width="1.3" fill="none"/></g>
<rect x="433.00" y="910.90" width="1349.10" height="239.20" rx="3" fill="#ffffff" stroke="#d3d5da" stroke-width="1"/>
<rect x="433.50" y="911.40" width="1348.10" height="27.20" rx="2" fill="#ececec"/>
<rect x="433.50" y="937.80" width="1348.10" height="1.00" rx="0" fill="#d3d5da"/>
<g transform="translate(443.80 918.80)"><path d="M1.8 0.5h4.4l-0.6 1.2v3.2l1.6 1.6v0.9H0.8V6.5l1.6-1.6V1.7z" fill="#7a7a7a"/><rect x="3.5" y="7" width="1" height="3.8" fill="#7a7a7a"/></g>
<text x="467.30" y="928.20" font-size="10.70" font-family="Liberation Sans" fill="#222" textLength="39.50" lengthAdjust="spacingAndGlyphs" stroke="#222" stroke-width="0.4">OBJECT</text>
<text x="534.40" y="928.20" font-size="10.70" font-family="Liberation Sans" fill="#222" stroke="#222" stroke-width="0.4">INDEX</text>
<text x="577.70" y="928.20" font-size="10.70" font-family="Liberation Sans" fill="#222" textLength="24.30" lengthAdjust="spacingAndGlyphs" stroke="#222" stroke-width="0.4">TYPE</text>
<text x="629.30" y="928.20" font-size="10.70" font-family="Liberation Sans" fill="#222" textLength="25.20" lengthAdjust="spacingAndGlyphs" stroke="#222" stroke-width="0.4">ITEM</text>
<text x="831.40" y="928.20" font-size="10.70" font-family="Liberation Sans" fill="#222" textLength="91.60" lengthAdjust="spacingAndGlyphs" stroke="#222" stroke-width="0.4">FIRMWARE VALUE</text>
<text x="1014.40" y="928.20" font-size="10.70" font-family="Liberation Sans" fill="#222" textLength="77.60" lengthAdjust="spacingAndGlyphs" stroke="#222" stroke-width="0.4">HOST ADDRESS</text>
<text x="1111.30" y="928.20" font-size="10.70" font-family="Liberation Sans" fill="#222" textLength="106.70" lengthAdjust="spacingAndGlyphs" stroke="#222" stroke-width="0.4">FIRMWARE ADDRESS</text>
<text x="1228.70" y="928.20" font-size="10.70" font-family="Liberation Sans" fill="#222" textLength="64.10" lengthAdjust="spacingAndGlyphs" stroke="#222" stroke-width="0.4">RECORDER 0</text>
<circle cx="1780.00" cy="944.00" r="2.00" fill="#9aa0a8"/>
<g transform="translate(443.80 943.10)"><path d="M1.8 0.5h4.4l-0.6 1.2v3.2l1.6 1.6v0.9H0.8V6.5l1.6-1.6V1.7z" fill="#8c8c8c"/><rect x="3.5" y="7" width="1" height="3.8" fill="#8c8c8c"/></g>
<text x="467.30" y="953.70" font-size="12.30" font-family="Liberation Sans" fill="#262626" textLength="56.10" lengthAdjust="spacingAndGlyphs">Controller</text>
<text x="549.50" y="953.70" font-size="12.30" font-family="Liberation Sans" fill="#262626" text-anchor="middle">0</text>
<text x="577.70" y="953.70" font-size="12.30" font-family="Liberation Sans" fill="#7a7a7a" textLength="29.70" lengthAdjust="spacingAndGlyphs">Int32</text>
<text x="629.30" y="953.70" font-size="12.30" font-family="Liberation Sans" fill="#262626" textLength="89.14" lengthAdjust="spacingAndGlyphs">SampleCounter</text>
<text x="831.40" y="953.70" font-size="12.30" font-family="Liberation Sans" fill="#111" textLength="55.82" lengthAdjust="spacingAndGlyphs" stroke="#111" stroke-width="0.25">19665419</text>
<text x="1052.20" y="953.70" font-size="12.30" font-family="Liberation Sans" fill="#555" text-anchor="middle" textLength="88.00" lengthAdjust="spacingAndGlyphs">2192809197800</text>
<text x="1164.00" y="953.70" font-size="12.30" font-family="Liberation Sans" fill="#555" text-anchor="middle" textLength="53.01" lengthAdjust="spacingAndGlyphs">21627112</text>
<g transform="translate(1259.80 949.70)"><circle cx="0" cy="0" r="5.3" fill="none" stroke="#3eb04a" stroke-width="1.2"/><path d="M0 -2.9v5.8M-2.9 0h5.8" stroke="#3eb04a" stroke-width="1.4"/></g>
<g transform="translate(443.80 964.15)"><path d="M1.8 0.5h4.4l-0.6 1.2v3.2l1.6 1.6v0.9H0.8V6.5l1.6-1.6V1.7z" fill="#8c8c8c"/><rect x="3.5" y="7" width="1" height="3.8" fill="#8c8c8c"/></g>
<text x="467.30" y="974.75" font-size="12.30" font-family="Liberation Sans" fill="#262626" textLength="56.10" lengthAdjust="spacingAndGlyphs">Controller</text>
<text x="549.50" y="974.75" font-size="12.30" font-family="Liberation Sans" fill="#262626" text-anchor="middle">0</text>
<text x="577.70" y="974.75" font-size="12.30" font-family="Liberation Sans" fill="#7a7a7a" textLength="29.70" lengthAdjust="spacingAndGlyphs">Int32</text>
<text x="629.30" y="974.75" font-size="12.30" font-family="Liberation Sans" fill="#262626" textLength="54.92" lengthAdjust="spacingAndGlyphs">Signature</text>
<text x="831.40" y="974.75" font-size="12.30" font-family="Liberation Sans" fill="#111" textLength="55.82" lengthAdjust="spacingAndGlyphs" stroke="#111" stroke-width="0.25">12648430</text>
<text x="1052.20" y="974.75" font-size="12.30" font-family="Liberation Sans" fill="#555" text-anchor="middle" textLength="88.00" lengthAdjust="spacingAndGlyphs">2192809197760</text>
<text x="1164.00" y="974.75" font-size="12.30" font-family="Liberation Sans" fill="#555" text-anchor="middle" textLength="53.91" lengthAdjust="spacingAndGlyphs">21627072</text>
<g transform="translate(1259.80 970.75)"><circle cx="0" cy="0" r="5.3" fill="none" stroke="#3eb04a" stroke-width="1.2"/><path d="M0 -2.9v5.8M-2.9 0h5.8" stroke="#3eb04a" stroke-width="1.4"/></g>
<g transform="translate(443.80 985.20)"><path d="M1.8 0.5h4.4l-0.6 1.2v3.2l1.6 1.6v0.9H0.8V6.5l1.6-1.6V1.7z" fill="#8c8c8c"/><rect x="3.5" y="7" width="1" height="3.8" fill="#8c8c8c"/></g>
<text x="467.30" y="995.80" font-size="12.30" font-family="Liberation Sans" fill="#262626" textLength="56.10" lengthAdjust="spacingAndGlyphs">Controller</text>
<text x="549.50" y="995.80" font-size="12.30" font-family="Liberation Sans" fill="#262626" text-anchor="middle">0</text>
<text x="577.70" y="995.80" font-size="12.30" font-family="Liberation Sans" fill="#7a7a7a" textLength="29.70" lengthAdjust="spacingAndGlyphs">Int32</text>
<text x="629.30" y="995.80" font-size="12.30" font-family="Liberation Sans" fill="#262626" textLength="61.08" lengthAdjust="spacingAndGlyphs">UserBuffer</text>
<text x="831.40" y="995.80" font-size="12.30" font-family="Liberation Sans" fill="#111" stroke="#111" stroke-width="0.25">0</text>
<text x="1052.20" y="995.80" font-size="12.30" font-family="Liberation Sans" fill="#555" text-anchor="middle" textLength="88.00" lengthAdjust="spacingAndGlyphs">2192809591704</text>
<text x="1164.00" y="995.80" font-size="12.30" font-family="Liberation Sans" fill="#555" text-anchor="middle" textLength="53.91" lengthAdjust="spacingAndGlyphs">22021016</text>
<g transform="translate(1259.80 991.80)"><circle cx="0" cy="0" r="5.3" fill="none" stroke="#3eb04a" stroke-width="1.2"/><path d="M0 -2.9v5.8M-2.9 0h5.8" stroke="#3eb04a" stroke-width="1.4"/></g>
<g transform="translate(443.80 1006.25)"><path d="M1.8 0.5h4.4l-0.6 1.2v3.2l1.6 1.6v0.9H0.8V6.5l1.6-1.6V1.7z" fill="#8c8c8c"/><rect x="3.5" y="7" width="1" height="3.8" fill="#8c8c8c"/></g>
<text x="467.30" y="1016.85" font-size="12.30" font-family="Liberation Sans" fill="#262626" textLength="56.10" lengthAdjust="spacingAndGlyphs">Controller</text>
<text x="549.50" y="1016.85" font-size="12.30" font-family="Liberation Sans" fill="#262626" text-anchor="middle">0</text>
<text x="577.70" y="1016.85" font-size="12.30" font-family="Liberation Sans" fill="#7a7a7a" textLength="29.70" lengthAdjust="spacingAndGlyphs">Int32</text>
<text x="629.30" y="1016.85" font-size="12.30" font-family="Liberation Sans" fill="#262626" textLength="127.41" lengthAdjust="spacingAndGlyphs">RecorderBufferPointer</text>
<text x="831.40" y="1016.85" font-size="12.30" font-family="Liberation Sans" fill="#111" textLength="55.82" lengthAdjust="spacingAndGlyphs" stroke="#111" stroke-width="0.25">22173472</text>
<text x="1052.20" y="1016.85" font-size="12.30" font-family="Liberation Sans" fill="#555" text-anchor="middle" textLength="88.00" lengthAdjust="spacingAndGlyphs">2192809612740</text>
<text x="1164.00" y="1016.85" font-size="12.30" font-family="Liberation Sans" fill="#555" text-anchor="middle" textLength="53.91" lengthAdjust="spacingAndGlyphs">22042052</text>
<g transform="translate(1259.80 1012.85)"><circle cx="0" cy="0" r="5.3" fill="none" stroke="#3eb04a" stroke-width="1.2"/><path d="M0 -2.9v5.8M-2.9 0h5.8" stroke="#3eb04a" stroke-width="1.4"/></g>
<g transform="translate(443.80 1027.30)"><path d="M1.8 0.5h4.4l-0.6 1.2v3.2l1.6 1.6v0.9H0.8V6.5l1.6-1.6V1.7z" fill="#8c8c8c"/><rect x="3.5" y="7" width="1" height="3.8" fill="#8c8c8c"/></g>
<text x="467.30" y="1037.90" font-size="12.30" font-family="Liberation Sans" fill="#262626" textLength="56.10" lengthAdjust="spacingAndGlyphs">Controller</text>
<text x="549.50" y="1037.90" font-size="12.30" font-family="Liberation Sans" fill="#262626" text-anchor="middle">0</text>
<text x="577.70" y="1037.90" font-size="12.30" font-family="Liberation Sans" fill="#7a7a7a" textLength="29.70" lengthAdjust="spacingAndGlyphs">Int32</text>
<text x="629.30" y="1037.90" font-size="12.30" font-family="Liberation Sans" fill="#262626" textLength="104.82" lengthAdjust="spacingAndGlyphs">LimitEnabledMask</text>
<text x="831.40" y="1037.90" font-size="12.30" font-family="Liberation Sans" fill="#111" stroke="#111" stroke-width="0.25">2</text>
<text x="1052.20" y="1037.90" font-size="12.30" font-family="Liberation Sans" fill="#555" text-anchor="middle" textLength="88.00" lengthAdjust="spacingAndGlyphs">2192809460160</text>
<text x="1164.00" y="1037.90" font-size="12.30" font-family="Liberation Sans" fill="#555" text-anchor="middle" textLength="53.91" lengthAdjust="spacingAndGlyphs">21889472</text>
<g transform="translate(1259.80 1033.90)"><circle cx="0" cy="0" r="5.3" fill="none" stroke="#3eb04a" stroke-width="1.2"/><path d="M0 -2.9v5.8M-2.9 0h5.8" stroke="#3eb04a" stroke-width="1.4"/></g>
<g transform="translate(443.80 1048.35)"><path d="M1.8 0.5h4.4l-0.6 1.2v3.2l1.6 1.6v0.9H0.8V6.5l1.6-1.6V1.7z" fill="#8c8c8c"/><rect x="3.5" y="7" width="1" height="3.8" fill="#8c8c8c"/></g>
<text x="467.30" y="1058.95" font-size="12.30" font-family="Liberation Sans" fill="#262626" textLength="56.10" lengthAdjust="spacingAndGlyphs">Controller</text>
<text x="549.50" y="1058.95" font-size="12.30" font-family="Liberation Sans" fill="#262626" text-anchor="middle">0</text>
<text x="577.70" y="1058.95" font-size="12.30" font-family="Liberation Sans" fill="#7a7a7a" textLength="29.70" lengthAdjust="spacingAndGlyphs">Int32</text>
<text x="629.30" y="1058.95" font-size="12.30" font-family="Liberation Sans" fill="#262626" textLength="192.52" lengthAdjust="spacingAndGlyphs">FrameSendReceiveMicroseconds</text>
<text x="831.40" y="1058.95" font-size="12.30" font-family="Liberation Sans" fill="#111" textLength="20.93" lengthAdjust="spacingAndGlyphs" stroke="#111" stroke-width="0.25">200</text>
<text x="1052.20" y="1058.95" font-size="12.30" font-family="Liberation Sans" fill="#555" text-anchor="middle" textLength="88.00" lengthAdjust="spacingAndGlyphs">2192823314676</text>
<text x="1164.00" y="1058.95" font-size="12.30" font-family="Liberation Sans" fill="#555" text-anchor="middle" textLength="53.91" lengthAdjust="spacingAndGlyphs">35743988</text>
<g transform="translate(1259.80 1054.95)"><circle cx="0" cy="0" r="5.3" fill="none" stroke="#3eb04a" stroke-width="1.2"/><path d="M0 -2.9v5.8M-2.9 0h5.8" stroke="#3eb04a" stroke-width="1.4"/></g>
<g transform="translate(443.80 1069.40)"><path d="M1.8 0.5h4.4l-0.6 1.2v3.2l1.6 1.6v0.9H0.8V6.5l1.6-1.6V1.7z" fill="#8c8c8c"/><rect x="3.5" y="7" width="1" height="3.8" fill="#8c8c8c"/></g>
<text x="467.30" y="1080.00" font-size="12.30" font-family="Liberation Sans" fill="#262626" textLength="56.10" lengthAdjust="spacingAndGlyphs">Controller</text>
<text x="549.50" y="1080.00" font-size="12.30" font-family="Liberation Sans" fill="#262626" text-anchor="middle">0</text>
<text x="577.70" y="1080.00" font-size="12.30" font-family="Liberation Sans" fill="#7a7a7a" textLength="29.70" lengthAdjust="spacingAndGlyphs">Int32</text>
<text x="629.30" y="1080.00" font-size="12.30" font-family="Liberation Sans" fill="#262626" textLength="143.34" lengthAdjust="spacingAndGlyphs">CompensatorOutputType</text>
<text x="831.40" y="1080.00" font-size="12.30" font-family="Liberation Sans" fill="#111" stroke="#111" stroke-width="0.25">0</text>
<text x="1052.20" y="1080.00" font-size="12.30" font-family="Liberation Sans" fill="#555" text-anchor="middle" textLength="88.00" lengthAdjust="spacingAndGlyphs">2192809612672</text>
<text x="1164.00" y="1080.00" font-size="12.30" font-family="Liberation Sans" fill="#555" text-anchor="middle" textLength="53.91" lengthAdjust="spacingAndGlyphs">22041984</text>
<g transform="translate(1259.80 1076.00)"><circle cx="0" cy="0" r="5.3" fill="none" stroke="#3eb04a" stroke-width="1.2"/><path d="M0 -2.9v5.8M-2.9 0h5.8" stroke="#3eb04a" stroke-width="1.4"/></g>
<g transform="translate(443.80 1090.45)"><path d="M1.8 0.5h4.4l-0.6 1.2v3.2l1.6 1.6v0.9H0.8V6.5l1.6-1.6V1.7z" fill="#8c8c8c"/><rect x="3.5" y="7" width="1" height="3.8" fill="#8c8c8c"/></g>
<text x="467.30" y="1101.05" font-size="12.30" font-family="Liberation Sans" fill="#262626" textLength="56.10" lengthAdjust="spacingAndGlyphs">Controller</text>
<text x="549.50" y="1101.05" font-size="12.30" font-family="Liberation Sans" fill="#262626" text-anchor="middle">0</text>
<text x="577.70" y="1101.05" font-size="12.30" font-family="Liberation Sans" fill="#7a7a7a" textLength="39.80" lengthAdjust="spacingAndGlyphs">Double</text>
<text x="629.30" y="1101.05" font-size="12.30" font-family="Liberation Sans" fill="#262626" textLength="185.89" lengthAdjust="spacingAndGlyphs">CompensatorCompensatorValue</text>
<text x="831.40" y="1101.05" font-size="12.30" font-family="Liberation Sans" fill="#111" textLength="143.80" lengthAdjust="spacingAndGlyphs" stroke="#111" stroke-width="0.25">1.895949833652251E-302</text>
<text x="1052.20" y="1101.05" font-size="12.30" font-family="Liberation Sans" fill="#555" text-anchor="middle" textLength="88.00" lengthAdjust="spacingAndGlyphs">2192809612744</text>
<text x="1164.00" y="1101.05" font-size="12.30" font-family="Liberation Sans" fill="#555" text-anchor="middle" textLength="53.91" lengthAdjust="spacingAndGlyphs">22042056</text>
<g transform="translate(1259.80 1097.05)"><circle cx="0" cy="0" r="5.3" fill="none" stroke="#3eb04a" stroke-width="1.2"/><path d="M0 -2.9v5.8M-2.9 0h5.8" stroke="#3eb04a" stroke-width="1.4"/></g>
<g transform="translate(443.80 1111.50)"><path d="M1.8 0.5h4.4l-0.6 1.2v3.2l1.6 1.6v0.9H0.8V6.5l1.6-1.6V1.7z" fill="#8c8c8c"/><rect x="3.5" y="7" width="1" height="3.8" fill="#8c8c8c"/></g>
<text x="467.30" y="1122.10" font-size="12.30" font-family="Liberation Sans" fill="#262626" textLength="56.10" lengthAdjust="spacingAndGlyphs">Controller</text>
<text x="549.50" y="1122.10" font-size="12.30" font-family="Liberation Sans" fill="#262626" text-anchor="middle">0</text>
<text x="577.70" y="1122.10" font-size="12.30" font-family="Liberation Sans" fill="#7a7a7a" textLength="29.70" lengthAdjust="spacingAndGlyphs">Int32</text>
<text x="629.30" y="1122.10" font-size="12.30" font-family="Liberation Sans" fill="#262626" textLength="121.42" lengthAdjust="spacingAndGlyphs">FirmwareTimingDelta</text>
<text x="831.40" y="1122.10" font-size="12.30" font-family="Liberation Sans" fill="#111" textLength="27.91" lengthAdjust="spacingAndGlyphs" stroke="#111" stroke-width="0.25">4000</text>
<text x="1052.20" y="1122.10" font-size="12.30" font-family="Liberation Sans" fill="#555" text-anchor="middle" textLength="88.00" lengthAdjust="spacingAndGlyphs">2192809197976</text>
<text x="1164.00" y="1122.10" font-size="12.30" font-family="Liberation Sans" fill="#555" text-anchor="middle" textLength="53.91" lengthAdjust="spacingAndGlyphs">21627288</text>
<g transform="translate(1259.80 1118.10)"><circle cx="0" cy="0" r="5.3" fill="none" stroke="#3eb04a" stroke-width="1.2"/><path d="M0 -2.9v5.8M-2.9 0h5.8" stroke="#3eb04a" stroke-width="1.4"/></g>
<g transform="translate(443.80 1132.55)"><path d="M1.8 0.5h4.4l-0.6 1.2v3.2l1.6 1.6v0.9H0.8V6.5l1.6-1.6V1.7z" fill="#8c8c8c"/><rect x="3.5" y="7" width="1" height="3.8" fill="#8c8c8c"/></g>
<text x="467.30" y="1143.15" font-size="12.30" font-family="Liberation Sans" fill="#262626" textLength="56.10" lengthAdjust="spacingAndGlyphs">Controller</text>
<text x="549.50" y="1143.15" font-size="12.30" font-family="Liberation Sans" fill="#262626" text-anchor="middle">0</text>
<text x="577.70" y="1143.15" font-size="12.30" font-family="Liberation Sans" fill="#7a7a7a" textLength="29.70" lengthAdjust="spacingAndGlyphs">Int32</text>
<text x="629.30" y="1143.15" font-size="12.30" font-family="Liberation Sans" fill="#262626" textLength="115.02" lengthAdjust="spacingAndGlyphs">NetworkTimingDelta</text>
<text x="831.40" y="1143.15" font-size="12.30" font-family="Liberation Sans" fill="#111" stroke="#111" stroke-width="0.25">0</text>
<text x="1052.20" y="1143.15" font-size="12.30" font-family="Liberation Sans" fill="#555" text-anchor="middle" textLength="88.00" lengthAdjust="spacingAndGlyphs">2192823315152</text>
<text x="1164.00" y="1143.15" font-size="12.30" font-family="Liberation Sans" fill="#555" text-anchor="middle" textLength="53.91" lengthAdjust="spacingAndGlyphs">35744464</text>
<g transform="translate(1259.80 1139.15)"><circle cx="0" cy="0" r="5.3" fill="none" stroke="#3eb04a" stroke-width="1.2"/><path d="M0 -2.9v5.8M-2.9 0h5.8" stroke="#3eb04a" stroke-width="1.4"/></g>
</svg></body></html>
